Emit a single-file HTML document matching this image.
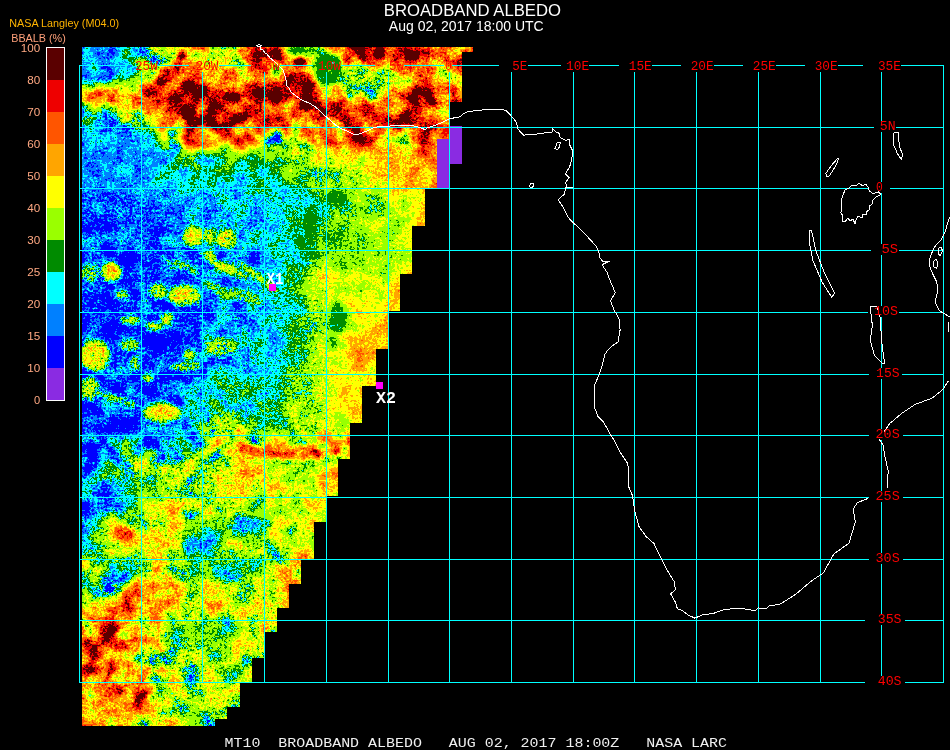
<!DOCTYPE html>
<html lang="en"><head><meta charset="utf-8"><title>BROADBAND ALBEDO</title>
<style>html,body{margin:0;padding:0;background:#000;}body{width:950px;height:750px;overflow:hidden;}svg{display:block;}.t{font-family:"Liberation Sans",Arial,sans-serif;}.m{font-family:"Liberation Mono","DejaVu Sans Mono",monospace;}</style></head><body>
<svg width="950" height="750" viewBox="0 0 950 750">
<defs>
<clipPath id="swath"><polygon points="82.0,47.0 473.0,47.0 473.0,52.0 462.0,52.0 462.0,102.0 450.0,102.0 450.0,188.0 425.0,188.0 425.0,226.0 412.0,226.0 412.0,274.0 400.0,274.0 400.0,311.0 388.0,311.0 388.0,349.0 376.0,349.0 376.0,386.0 362.0,386.0 362.0,423.0 350.0,423.0 350.0,459.0 338.0,459.0 338.0,496.0 326.0,496.0 326.0,522.0 314.0,522.0 314.0,559.0 301.0,559.0 301.0,584.0 289.0,584.0 289.0,608.0 277.0,608.0 277.0,632.0 264.0,632.0 264.0,658.0 252.0,658.0 252.0,682.0 240.0,682.0 240.0,707.0 227.0,707.0 227.0,719.0 215.0,719.0 215.0,726.0 82.0,726.0"/></clipPath>
<filter id="b1" filterUnits="userSpaceOnUse" x="30" y="0" width="500" height="750" color-interpolation-filters="sRGB"><feGaussianBlur stdDeviation="6"/></filter>
<filter id="b2" filterUnits="userSpaceOnUse" x="30" y="0" width="500" height="750" color-interpolation-filters="sRGB"><feGaussianBlur stdDeviation="2.2"/></filter>
<filter id="alb" filterUnits="userSpaceOnUse" x="60" y="30" width="440" height="710" color-interpolation-filters="sRGB">
<feColorMatrix in="SourceGraphic" type="matrix" values="1 0 0 0 0  1 0 0 0 0  1 0 0 0 0  0 0 0 0 1" result="f"/>
<feColorMatrix in="SourceGraphic" type="matrix" values="0 1 0 0 0  0 1 0 0 0  0 1 0 0 0  0 0 0 0 1" result="am"/>
<feTurbulence type="fractalNoise" baseFrequency="0.06 0.06" numOctaves="2" seed="7" result="n1"/>
<feColorMatrix in="n1" type="matrix" values="1 0 0 0 0  1 0 0 0 0  1 0 0 0 0  0 0 0 0 1" result="g1"/>
<feTurbulence type="fractalNoise" baseFrequency="0.4" numOctaves="2" seed="3" result="n2"/>
<feColorMatrix in="n2" type="matrix" values="0 1 0 0 0  0 1 0 0 0  0 1 0 0 0  0 0 0 0 1" result="g2"/>
<feComposite in="am" in2="g1" operator="arithmetic" k1="2.1930" k2="-1.0965" k3="0" k4="0.5" result="m1"/>
<feComposite in="f" in2="m1" operator="arithmetic" k1="0" k2="1" k3="1" k4="-0.5" result="s1"/>
<feColorMatrix in="SourceGraphic" type="matrix" values="0 0 1 0 0  0 0 1 0 0  0 0 1 0 0  0 0 0 0 1" result="fa"/>
<feComposite in="fa" in2="g2" operator="arithmetic" k1="2.1930" k2="-1.0965" k3="0" k4="0.5" result="m2"/>
<feComposite in="s1" in2="m2" operator="arithmetic" k1="0" k2="1" k3="1" k4="-0.5" result="s2"/>
<feComponentTransfer in="s2">
<feFuncR type="discrete" tableValues="0.0000 0.0000 0.0000 0.0000 0.0000 0.0000 0.6039 0.6039 1.0000 1.0000 1.0000 1.0000 1.0000 1.0000 0.9333 0.9333 0.3529 0.3529 0.3529 0.3529"/>
<feFuncG type="discrete" tableValues="0.0000 0.0000 0.0000 0.5020 1.0000 0.5451 1.0000 1.0000 1.0000 1.0000 0.6471 0.6471 0.3333 0.3333 0.0000 0.0000 0.0000 0.0000 0.0000 0.0000"/>
<feFuncB type="discrete" tableValues="1.0000 1.0000 1.0000 1.0000 1.0000 0.0000 0.0000 0.0000 0.0000 0.0000 0.0000 0.0000 0.0000 0.0000 0.0000 0.0000 0.0000 0.0000 0.0000 0.0000"/>
</feComponentTransfer>
</filter>
</defs>
<rect width="950" height="750" fill="#000"/>
<g clip-path="url(#swath)"><g filter="url(#alb)">
<g filter="url(#b1)">
<rect x="30" y="0" width="500" height="750" fill="#808030"/>
<rect x="50.3" y="14.9" width="51.1" height="51.1" fill="rgb(45,31,18)"/>
<rect x="100.9" y="14.9" width="21.1" height="51.1" fill="rgb(42,31,18)"/>
<rect x="121.4" y="14.9" width="21.1" height="51.1" fill="rgb(50,31,18)"/>
<rect x="142.0" y="14.9" width="21.1" height="51.1" fill="rgb(76,92,51)"/>
<rect x="162.6" y="14.9" width="21.1" height="51.1" fill="rgb(115,92,51)"/>
<rect x="183.1" y="14.9" width="21.1" height="51.1" fill="rgb(148,92,51)"/>
<rect x="203.7" y="14.9" width="21.1" height="51.1" fill="rgb(102,92,51)"/>
<rect x="224.3" y="14.9" width="21.1" height="51.1" fill="rgb(89,92,51)"/>
<rect x="244.8" y="14.9" width="21.1" height="51.1" fill="rgb(186,92,51)"/>
<rect x="265.4" y="14.9" width="21.1" height="51.1" fill="rgb(186,92,51)"/>
<rect x="286.0" y="14.9" width="21.1" height="51.1" fill="rgb(73,36,26)"/>
<rect x="306.5" y="14.9" width="21.1" height="51.1" fill="rgb(84,71,51)"/>
<rect x="327.1" y="14.9" width="21.1" height="51.1" fill="rgb(161,71,51)"/>
<rect x="347.7" y="14.9" width="21.1" height="51.1" fill="rgb(196,71,51)"/>
<rect x="368.2" y="14.9" width="21.1" height="51.1" fill="rgb(196,71,51)"/>
<rect x="388.8" y="14.9" width="21.1" height="51.1" fill="rgb(196,71,51)"/>
<rect x="409.4" y="14.9" width="21.1" height="51.1" fill="rgb(173,92,51)"/>
<rect x="429.9" y="14.9" width="21.1" height="51.1" fill="rgb(145,92,51)"/>
<rect x="450.5" y="14.9" width="21.1" height="51.1" fill="rgb(153,92,51)"/>
<rect x="471.1" y="14.9" width="21.1" height="51.1" fill="rgb(153,92,51)"/>
<rect x="491.6" y="14.9" width="21.1" height="51.1" fill="rgb(153,92,51)"/>
<rect x="50.3" y="65.5" width="51.1" height="21.1" fill="rgb(42,31,18)"/>
<rect x="100.9" y="65.5" width="21.1" height="21.1" fill="rgb(52,31,18)"/>
<rect x="121.4" y="65.5" width="21.1" height="21.1" fill="rgb(57,31,18)"/>
<rect x="142.0" y="65.5" width="21.1" height="21.1" fill="rgb(115,92,51)"/>
<rect x="162.6" y="65.5" width="21.1" height="21.1" fill="rgb(181,92,51)"/>
<rect x="183.1" y="65.5" width="21.1" height="21.1" fill="rgb(186,92,51)"/>
<rect x="203.7" y="65.5" width="21.1" height="21.1" fill="rgb(122,92,51)"/>
<rect x="224.3" y="65.5" width="21.1" height="21.1" fill="rgb(115,92,51)"/>
<rect x="244.8" y="65.5" width="21.1" height="21.1" fill="rgb(161,92,51)"/>
<rect x="265.4" y="65.5" width="21.1" height="21.1" fill="rgb(148,92,51)"/>
<rect x="286.0" y="65.5" width="21.1" height="21.1" fill="rgb(196,71,51)"/>
<rect x="306.5" y="65.5" width="21.1" height="21.1" fill="rgb(128,71,51)"/>
<rect x="327.1" y="65.5" width="21.1" height="21.1" fill="rgb(73,36,26)"/>
<rect x="347.7" y="65.5" width="21.1" height="21.1" fill="rgb(76,71,51)"/>
<rect x="368.2" y="65.5" width="21.1" height="21.1" fill="rgb(94,71,51)"/>
<rect x="388.8" y="65.5" width="21.1" height="21.1" fill="rgb(110,71,51)"/>
<rect x="409.4" y="65.5" width="21.1" height="21.1" fill="rgb(145,92,51)"/>
<rect x="429.9" y="65.5" width="21.1" height="21.1" fill="rgb(140,92,51)"/>
<rect x="450.5" y="65.5" width="21.1" height="21.1" fill="rgb(140,92,51)"/>
<rect x="471.1" y="65.5" width="21.1" height="21.1" fill="rgb(140,92,51)"/>
<rect x="491.6" y="65.5" width="21.1" height="21.1" fill="rgb(140,92,51)"/>
<rect x="50.3" y="86.1" width="51.1" height="21.1" fill="rgb(128,102,51)"/>
<rect x="100.9" y="86.1" width="21.1" height="21.1" fill="rgb(161,102,51)"/>
<rect x="121.4" y="86.1" width="21.1" height="21.1" fill="rgb(161,102,51)"/>
<rect x="142.0" y="86.1" width="21.1" height="21.1" fill="rgb(181,92,51)"/>
<rect x="162.6" y="86.1" width="21.1" height="21.1" fill="rgb(186,92,51)"/>
<rect x="183.1" y="86.1" width="21.1" height="21.1" fill="rgb(196,92,51)"/>
<rect x="203.7" y="86.1" width="21.1" height="21.1" fill="rgb(186,92,51)"/>
<rect x="224.3" y="86.1" width="21.1" height="21.1" fill="rgb(191,92,51)"/>
<rect x="244.8" y="86.1" width="21.1" height="21.1" fill="rgb(176,92,51)"/>
<rect x="265.4" y="86.1" width="21.1" height="21.1" fill="rgb(196,92,51)"/>
<rect x="286.0" y="86.1" width="21.1" height="21.1" fill="rgb(196,92,51)"/>
<rect x="306.5" y="86.1" width="21.1" height="21.1" fill="rgb(191,92,51)"/>
<rect x="327.1" y="86.1" width="21.1" height="21.1" fill="rgb(135,92,51)"/>
<rect x="347.7" y="86.1" width="21.1" height="21.1" fill="rgb(122,92,51)"/>
<rect x="368.2" y="86.1" width="21.1" height="21.1" fill="rgb(135,92,51)"/>
<rect x="388.8" y="86.1" width="21.1" height="21.1" fill="rgb(135,92,51)"/>
<rect x="409.4" y="86.1" width="21.1" height="21.1" fill="rgb(204,92,51)"/>
<rect x="429.9" y="86.1" width="21.1" height="21.1" fill="rgb(145,92,51)"/>
<rect x="450.5" y="86.1" width="21.1" height="21.1" fill="rgb(140,92,51)"/>
<rect x="471.1" y="86.1" width="21.1" height="21.1" fill="rgb(140,92,51)"/>
<rect x="491.6" y="86.1" width="21.1" height="21.1" fill="rgb(140,92,51)"/>
<rect x="50.3" y="106.6" width="51.1" height="21.1" fill="rgb(50,41,26)"/>
<rect x="100.9" y="106.6" width="21.1" height="21.1" fill="rgb(55,41,26)"/>
<rect x="121.4" y="106.6" width="21.1" height="21.1" fill="rgb(76,82,51)"/>
<rect x="142.0" y="106.6" width="21.1" height="21.1" fill="rgb(128,92,51)"/>
<rect x="162.6" y="106.6" width="21.1" height="21.1" fill="rgb(173,92,51)"/>
<rect x="183.1" y="106.6" width="21.1" height="21.1" fill="rgb(196,92,51)"/>
<rect x="203.7" y="106.6" width="21.1" height="21.1" fill="rgb(196,92,51)"/>
<rect x="224.3" y="106.6" width="21.1" height="21.1" fill="rgb(191,92,51)"/>
<rect x="244.8" y="106.6" width="21.1" height="21.1" fill="rgb(186,92,51)"/>
<rect x="265.4" y="106.6" width="21.1" height="21.1" fill="rgb(186,92,51)"/>
<rect x="286.0" y="106.6" width="21.1" height="21.1" fill="rgb(161,92,51)"/>
<rect x="306.5" y="106.6" width="21.1" height="21.1" fill="rgb(186,92,51)"/>
<rect x="327.1" y="106.6" width="21.1" height="21.1" fill="rgb(186,92,51)"/>
<rect x="347.7" y="106.6" width="21.1" height="21.1" fill="rgb(186,92,51)"/>
<rect x="368.2" y="106.6" width="21.1" height="21.1" fill="rgb(186,92,51)"/>
<rect x="388.8" y="106.6" width="21.1" height="21.1" fill="rgb(196,92,51)"/>
<rect x="409.4" y="106.6" width="21.1" height="21.1" fill="rgb(196,92,51)"/>
<rect x="429.9" y="106.6" width="21.1" height="21.1" fill="rgb(135,92,51)"/>
<rect x="450.5" y="106.6" width="21.1" height="21.1" fill="rgb(140,92,51)"/>
<rect x="471.1" y="106.6" width="21.1" height="21.1" fill="rgb(140,92,51)"/>
<rect x="491.6" y="106.6" width="21.1" height="21.1" fill="rgb(140,92,51)"/>
<rect x="50.3" y="127.2" width="51.1" height="21.1" fill="rgb(45,20,18)"/>
<rect x="100.9" y="127.2" width="21.1" height="21.1" fill="rgb(45,20,18)"/>
<rect x="121.4" y="127.2" width="21.1" height="21.1" fill="rgb(46,20,18)"/>
<rect x="142.0" y="127.2" width="21.1" height="21.1" fill="rgb(50,20,18)"/>
<rect x="162.6" y="127.2" width="21.1" height="21.1" fill="rgb(102,122,36)"/>
<rect x="183.1" y="127.2" width="21.1" height="21.1" fill="rgb(140,122,36)"/>
<rect x="203.7" y="127.2" width="21.1" height="21.1" fill="rgb(153,122,36)"/>
<rect x="224.3" y="127.2" width="21.1" height="21.1" fill="rgb(153,122,36)"/>
<rect x="244.8" y="127.2" width="21.1" height="21.1" fill="rgb(140,122,36)"/>
<rect x="265.4" y="127.2" width="21.1" height="21.1" fill="rgb(97,122,41)"/>
<rect x="286.0" y="127.2" width="21.1" height="21.1" fill="rgb(110,122,41)"/>
<rect x="306.5" y="127.2" width="21.1" height="21.1" fill="rgb(140,122,41)"/>
<rect x="327.1" y="127.2" width="21.1" height="21.1" fill="rgb(153,122,41)"/>
<rect x="347.7" y="127.2" width="21.1" height="21.1" fill="rgb(178,122,41)"/>
<rect x="368.2" y="127.2" width="21.1" height="21.1" fill="rgb(140,122,41)"/>
<rect x="388.8" y="127.2" width="21.1" height="21.1" fill="rgb(128,122,41)"/>
<rect x="409.4" y="127.2" width="21.1" height="21.1" fill="rgb(153,122,41)"/>
<rect x="429.9" y="127.2" width="21.1" height="21.1" fill="rgb(166,122,41)"/>
<rect x="450.5" y="127.2" width="21.1" height="21.1" fill="rgb(166,122,41)"/>
<rect x="471.1" y="127.2" width="21.1" height="21.1" fill="rgb(166,122,41)"/>
<rect x="491.6" y="127.2" width="21.1" height="21.1" fill="rgb(166,122,41)"/>
<rect x="50.3" y="147.8" width="51.1" height="21.1" fill="rgb(43,20,18)"/>
<rect x="100.9" y="147.8" width="21.1" height="21.1" fill="rgb(45,20,18)"/>
<rect x="121.4" y="147.8" width="21.1" height="21.1" fill="rgb(46,20,18)"/>
<rect x="142.0" y="147.8" width="21.1" height="21.1" fill="rgb(48,20,18)"/>
<rect x="162.6" y="147.8" width="21.1" height="21.1" fill="rgb(57,26,18)"/>
<rect x="183.1" y="147.8" width="21.1" height="21.1" fill="rgb(79,51,36)"/>
<rect x="203.7" y="147.8" width="21.1" height="21.1" fill="rgb(68,26,18)"/>
<rect x="224.3" y="147.8" width="21.1" height="21.1" fill="rgb(74,26,18)"/>
<rect x="244.8" y="147.8" width="21.1" height="21.1" fill="rgb(70,26,18)"/>
<rect x="265.4" y="147.8" width="21.1" height="21.1" fill="rgb(70,26,20)"/>
<rect x="286.0" y="147.8" width="21.1" height="21.1" fill="rgb(84,51,41)"/>
<rect x="306.5" y="147.8" width="21.1" height="21.1" fill="rgb(97,51,41)"/>
<rect x="327.1" y="147.8" width="21.1" height="21.1" fill="rgb(102,51,41)"/>
<rect x="347.7" y="147.8" width="21.1" height="21.1" fill="rgb(120,51,41)"/>
<rect x="368.2" y="147.8" width="21.1" height="21.1" fill="rgb(128,51,41)"/>
<rect x="388.8" y="147.8" width="21.1" height="21.1" fill="rgb(128,51,41)"/>
<rect x="409.4" y="147.8" width="21.1" height="21.1" fill="rgb(145,51,41)"/>
<rect x="429.9" y="147.8" width="21.1" height="21.1" fill="rgb(153,51,41)"/>
<rect x="450.5" y="147.8" width="21.1" height="21.1" fill="rgb(153,51,41)"/>
<rect x="471.1" y="147.8" width="21.1" height="21.1" fill="rgb(153,51,41)"/>
<rect x="491.6" y="147.8" width="21.1" height="21.1" fill="rgb(153,51,41)"/>
<rect x="50.3" y="168.3" width="51.1" height="21.1" fill="rgb(46,20,18)"/>
<rect x="100.9" y="168.3" width="21.1" height="21.1" fill="rgb(47,20,18)"/>
<rect x="121.4" y="168.3" width="21.1" height="21.1" fill="rgb(48,20,18)"/>
<rect x="142.0" y="168.3" width="21.1" height="21.1" fill="rgb(51,20,18)"/>
<rect x="162.6" y="168.3" width="21.1" height="21.1" fill="rgb(56,26,18)"/>
<rect x="183.1" y="168.3" width="21.1" height="21.1" fill="rgb(59,26,18)"/>
<rect x="203.7" y="168.3" width="21.1" height="21.1" fill="rgb(59,26,18)"/>
<rect x="224.3" y="168.3" width="21.1" height="21.1" fill="rgb(59,26,18)"/>
<rect x="244.8" y="168.3" width="21.1" height="21.1" fill="rgb(59,26,18)"/>
<rect x="265.4" y="168.3" width="21.1" height="21.1" fill="rgb(65,26,20)"/>
<rect x="286.0" y="168.3" width="21.1" height="21.1" fill="rgb(70,26,20)"/>
<rect x="306.5" y="168.3" width="21.1" height="21.1" fill="rgb(82,51,41)"/>
<rect x="327.1" y="168.3" width="21.1" height="21.1" fill="rgb(84,51,41)"/>
<rect x="347.7" y="168.3" width="21.1" height="21.1" fill="rgb(102,51,41)"/>
<rect x="368.2" y="168.3" width="21.1" height="21.1" fill="rgb(110,51,41)"/>
<rect x="388.8" y="168.3" width="21.1" height="21.1" fill="rgb(122,51,41)"/>
<rect x="409.4" y="168.3" width="21.1" height="21.1" fill="rgb(140,51,41)"/>
<rect x="429.9" y="168.3" width="21.1" height="21.1" fill="rgb(153,51,41)"/>
<rect x="450.5" y="168.3" width="21.1" height="21.1" fill="rgb(153,51,41)"/>
<rect x="471.1" y="168.3" width="21.1" height="21.1" fill="rgb(153,51,41)"/>
<rect x="491.6" y="168.3" width="21.1" height="21.1" fill="rgb(153,51,41)"/>
<rect x="50.3" y="188.9" width="51.1" height="21.1" fill="rgb(38,20,26)"/>
<rect x="100.9" y="188.9" width="21.1" height="21.1" fill="rgb(38,20,26)"/>
<rect x="121.4" y="188.9" width="21.1" height="21.1" fill="rgb(37,20,26)"/>
<rect x="142.0" y="188.9" width="21.1" height="21.1" fill="rgb(42,20,26)"/>
<rect x="162.6" y="188.9" width="21.1" height="21.1" fill="rgb(47,20,26)"/>
<rect x="183.1" y="188.9" width="21.1" height="21.1" fill="rgb(50,20,26)"/>
<rect x="203.7" y="188.9" width="21.1" height="21.1" fill="rgb(51,20,26)"/>
<rect x="224.3" y="188.9" width="21.1" height="21.1" fill="rgb(51,20,26)"/>
<rect x="244.8" y="188.9" width="21.1" height="21.1" fill="rgb(54,20,26)"/>
<rect x="265.4" y="188.9" width="21.1" height="21.1" fill="rgb(52,18,23)"/>
<rect x="286.0" y="188.9" width="21.1" height="21.1" fill="rgb(57,18,23)"/>
<rect x="306.5" y="188.9" width="21.1" height="21.1" fill="rgb(64,18,23)"/>
<rect x="327.1" y="188.9" width="21.1" height="21.1" fill="rgb(82,36,31)"/>
<rect x="347.7" y="188.9" width="21.1" height="21.1" fill="rgb(84,36,31)"/>
<rect x="368.2" y="188.9" width="21.1" height="21.1" fill="rgb(87,36,31)"/>
<rect x="388.8" y="188.9" width="21.1" height="21.1" fill="rgb(97,36,31)"/>
<rect x="409.4" y="188.9" width="21.1" height="21.1" fill="rgb(115,36,31)"/>
<rect x="429.9" y="188.9" width="21.1" height="21.1" fill="rgb(115,36,31)"/>
<rect x="450.5" y="188.9" width="21.1" height="21.1" fill="rgb(115,36,31)"/>
<rect x="471.1" y="188.9" width="21.1" height="21.1" fill="rgb(115,36,31)"/>
<rect x="491.6" y="188.9" width="21.1" height="21.1" fill="rgb(115,36,31)"/>
<rect x="50.3" y="209.5" width="51.1" height="21.1" fill="rgb(40,20,26)"/>
<rect x="100.9" y="209.5" width="21.1" height="21.1" fill="rgb(42,20,26)"/>
<rect x="121.4" y="209.5" width="21.1" height="21.1" fill="rgb(41,20,26)"/>
<rect x="142.0" y="209.5" width="21.1" height="21.1" fill="rgb(40,20,26)"/>
<rect x="162.6" y="209.5" width="21.1" height="21.1" fill="rgb(41,20,26)"/>
<rect x="183.1" y="209.5" width="21.1" height="21.1" fill="rgb(45,20,26)"/>
<rect x="203.7" y="209.5" width="21.1" height="21.1" fill="rgb(47,20,26)"/>
<rect x="224.3" y="209.5" width="21.1" height="21.1" fill="rgb(50,20,26)"/>
<rect x="244.8" y="209.5" width="21.1" height="21.1" fill="rgb(51,20,26)"/>
<rect x="265.4" y="209.5" width="21.1" height="21.1" fill="rgb(55,18,23)"/>
<rect x="286.0" y="209.5" width="21.1" height="21.1" fill="rgb(60,18,23)"/>
<rect x="306.5" y="209.5" width="21.1" height="21.1" fill="rgb(66,18,23)"/>
<rect x="327.1" y="209.5" width="21.1" height="21.1" fill="rgb(79,36,31)"/>
<rect x="347.7" y="209.5" width="21.1" height="21.1" fill="rgb(84,36,31)"/>
<rect x="368.2" y="209.5" width="21.1" height="21.1" fill="rgb(87,36,31)"/>
<rect x="388.8" y="209.5" width="21.1" height="21.1" fill="rgb(97,36,31)"/>
<rect x="409.4" y="209.5" width="21.1" height="21.1" fill="rgb(115,36,31)"/>
<rect x="429.9" y="209.5" width="21.1" height="21.1" fill="rgb(115,36,31)"/>
<rect x="450.5" y="209.5" width="21.1" height="21.1" fill="rgb(115,36,31)"/>
<rect x="471.1" y="209.5" width="21.1" height="21.1" fill="rgb(115,36,31)"/>
<rect x="491.6" y="209.5" width="21.1" height="21.1" fill="rgb(115,36,31)"/>
<rect x="50.3" y="230.0" width="51.1" height="21.1" fill="rgb(37,28,26)"/>
<rect x="100.9" y="230.0" width="21.1" height="21.1" fill="rgb(40,28,26)"/>
<rect x="121.4" y="230.0" width="21.1" height="21.1" fill="rgb(42,28,26)"/>
<rect x="142.0" y="230.0" width="21.1" height="21.1" fill="rgb(38,28,26)"/>
<rect x="162.6" y="230.0" width="21.1" height="21.1" fill="rgb(40,28,26)"/>
<rect x="183.1" y="230.0" width="21.1" height="21.1" fill="rgb(42,28,26)"/>
<rect x="203.7" y="230.0" width="21.1" height="21.1" fill="rgb(45,28,26)"/>
<rect x="224.3" y="230.0" width="21.1" height="21.1" fill="rgb(45,28,26)"/>
<rect x="244.8" y="230.0" width="21.1" height="21.1" fill="rgb(50,28,26)"/>
<rect x="265.4" y="230.0" width="21.1" height="21.1" fill="rgb(57,18,23)"/>
<rect x="286.0" y="230.0" width="21.1" height="21.1" fill="rgb(61,18,23)"/>
<rect x="306.5" y="230.0" width="21.1" height="21.1" fill="rgb(68,18,23)"/>
<rect x="327.1" y="230.0" width="21.1" height="21.1" fill="rgb(75,10,15)"/>
<rect x="347.7" y="230.0" width="21.1" height="21.1" fill="rgb(84,20,31)"/>
<rect x="368.2" y="230.0" width="21.1" height="21.1" fill="rgb(87,20,31)"/>
<rect x="388.8" y="230.0" width="21.1" height="21.1" fill="rgb(97,20,31)"/>
<rect x="409.4" y="230.0" width="21.1" height="21.1" fill="rgb(115,20,31)"/>
<rect x="429.9" y="230.0" width="21.1" height="21.1" fill="rgb(115,20,31)"/>
<rect x="450.5" y="230.0" width="21.1" height="21.1" fill="rgb(115,20,31)"/>
<rect x="471.1" y="230.0" width="21.1" height="21.1" fill="rgb(115,20,31)"/>
<rect x="491.6" y="230.0" width="21.1" height="21.1" fill="rgb(115,20,31)"/>
<rect x="50.3" y="250.6" width="51.1" height="21.1" fill="rgb(36,28,26)"/>
<rect x="100.9" y="250.6" width="21.1" height="21.1" fill="rgb(36,28,26)"/>
<rect x="121.4" y="250.6" width="21.1" height="21.1" fill="rgb(32,28,26)"/>
<rect x="142.0" y="250.6" width="21.1" height="21.1" fill="rgb(34,28,26)"/>
<rect x="162.6" y="250.6" width="21.1" height="21.1" fill="rgb(38,28,26)"/>
<rect x="183.1" y="250.6" width="21.1" height="21.1" fill="rgb(40,28,26)"/>
<rect x="203.7" y="250.6" width="21.1" height="21.1" fill="rgb(42,28,26)"/>
<rect x="224.3" y="250.6" width="21.1" height="21.1" fill="rgb(42,28,26)"/>
<rect x="244.8" y="250.6" width="21.1" height="21.1" fill="rgb(45,28,26)"/>
<rect x="265.4" y="250.6" width="21.1" height="21.1" fill="rgb(55,18,23)"/>
<rect x="286.0" y="250.6" width="21.1" height="21.1" fill="rgb(61,18,23)"/>
<rect x="306.5" y="250.6" width="21.1" height="21.1" fill="rgb(79,36,46)"/>
<rect x="327.1" y="250.6" width="21.1" height="21.1" fill="rgb(84,20,31)"/>
<rect x="347.7" y="250.6" width="21.1" height="21.1" fill="rgb(84,20,31)"/>
<rect x="368.2" y="250.6" width="21.1" height="21.1" fill="rgb(87,20,31)"/>
<rect x="388.8" y="250.6" width="21.1" height="21.1" fill="rgb(99,20,31)"/>
<rect x="409.4" y="250.6" width="21.1" height="21.1" fill="rgb(115,20,31)"/>
<rect x="429.9" y="250.6" width="21.1" height="21.1" fill="rgb(115,20,31)"/>
<rect x="450.5" y="250.6" width="21.1" height="21.1" fill="rgb(115,20,31)"/>
<rect x="471.1" y="250.6" width="21.1" height="21.1" fill="rgb(115,20,31)"/>
<rect x="491.6" y="250.6" width="21.1" height="21.1" fill="rgb(115,20,31)"/>
<rect x="50.3" y="271.2" width="51.1" height="21.1" fill="rgb(36,28,26)"/>
<rect x="100.9" y="271.2" width="21.1" height="21.1" fill="rgb(36,28,26)"/>
<rect x="121.4" y="271.2" width="21.1" height="21.1" fill="rgb(32,28,26)"/>
<rect x="142.0" y="271.2" width="21.1" height="21.1" fill="rgb(34,28,26)"/>
<rect x="162.6" y="271.2" width="21.1" height="21.1" fill="rgb(38,28,26)"/>
<rect x="183.1" y="271.2" width="21.1" height="21.1" fill="rgb(40,28,26)"/>
<rect x="203.7" y="271.2" width="21.1" height="21.1" fill="rgb(42,28,26)"/>
<rect x="224.3" y="271.2" width="21.1" height="21.1" fill="rgb(42,28,26)"/>
<rect x="244.8" y="271.2" width="21.1" height="21.1" fill="rgb(45,28,26)"/>
<rect x="265.4" y="271.2" width="21.1" height="21.1" fill="rgb(55,18,23)"/>
<rect x="286.0" y="271.2" width="21.1" height="21.1" fill="rgb(65,18,23)"/>
<rect x="306.5" y="271.2" width="21.1" height="21.1" fill="rgb(105,36,46)"/>
<rect x="327.1" y="271.2" width="21.1" height="21.1" fill="rgb(110,36,31)"/>
<rect x="347.7" y="271.2" width="21.1" height="21.1" fill="rgb(99,36,31)"/>
<rect x="368.2" y="271.2" width="21.1" height="21.1" fill="rgb(94,36,31)"/>
<rect x="388.8" y="271.2" width="21.1" height="21.1" fill="rgb(120,36,31)"/>
<rect x="409.4" y="271.2" width="21.1" height="21.1" fill="rgb(120,36,31)"/>
<rect x="429.9" y="271.2" width="21.1" height="21.1" fill="rgb(120,36,31)"/>
<rect x="450.5" y="271.2" width="21.1" height="21.1" fill="rgb(120,36,31)"/>
<rect x="471.1" y="271.2" width="21.1" height="21.1" fill="rgb(120,36,31)"/>
<rect x="491.6" y="271.2" width="21.1" height="21.1" fill="rgb(120,36,31)"/>
<rect x="50.3" y="291.7" width="51.1" height="21.1" fill="rgb(32,28,26)"/>
<rect x="100.9" y="291.7" width="21.1" height="21.1" fill="rgb(33,28,26)"/>
<rect x="121.4" y="291.7" width="21.1" height="21.1" fill="rgb(33,28,26)"/>
<rect x="142.0" y="291.7" width="21.1" height="21.1" fill="rgb(36,28,26)"/>
<rect x="162.6" y="291.7" width="21.1" height="21.1" fill="rgb(38,28,26)"/>
<rect x="183.1" y="291.7" width="21.1" height="21.1" fill="rgb(38,28,26)"/>
<rect x="203.7" y="291.7" width="21.1" height="21.1" fill="rgb(41,28,26)"/>
<rect x="224.3" y="291.7" width="21.1" height="21.1" fill="rgb(42,28,26)"/>
<rect x="244.8" y="291.7" width="21.1" height="21.1" fill="rgb(45,28,26)"/>
<rect x="265.4" y="291.7" width="21.1" height="21.1" fill="rgb(55,18,23)"/>
<rect x="286.0" y="291.7" width="21.1" height="21.1" fill="rgb(64,18,23)"/>
<rect x="306.5" y="291.7" width="21.1" height="21.1" fill="rgb(97,36,46)"/>
<rect x="327.1" y="291.7" width="21.1" height="21.1" fill="rgb(102,36,31)"/>
<rect x="347.7" y="291.7" width="21.1" height="21.1" fill="rgb(122,36,31)"/>
<rect x="368.2" y="291.7" width="21.1" height="21.1" fill="rgb(102,36,31)"/>
<rect x="388.8" y="291.7" width="21.1" height="21.1" fill="rgb(120,36,31)"/>
<rect x="409.4" y="291.7" width="21.1" height="21.1" fill="rgb(120,36,31)"/>
<rect x="429.9" y="291.7" width="21.1" height="21.1" fill="rgb(120,36,31)"/>
<rect x="450.5" y="291.7" width="21.1" height="21.1" fill="rgb(120,36,31)"/>
<rect x="471.1" y="291.7" width="21.1" height="21.1" fill="rgb(120,36,31)"/>
<rect x="491.6" y="291.7" width="21.1" height="21.1" fill="rgb(120,36,31)"/>
<rect x="50.3" y="312.3" width="51.1" height="21.1" fill="rgb(31,28,26)"/>
<rect x="100.9" y="312.3" width="21.1" height="21.1" fill="rgb(32,28,26)"/>
<rect x="121.4" y="312.3" width="21.1" height="21.1" fill="rgb(34,28,26)"/>
<rect x="142.0" y="312.3" width="21.1" height="21.1" fill="rgb(34,28,26)"/>
<rect x="162.6" y="312.3" width="21.1" height="21.1" fill="rgb(34,28,26)"/>
<rect x="183.1" y="312.3" width="21.1" height="21.1" fill="rgb(34,28,26)"/>
<rect x="203.7" y="312.3" width="21.1" height="21.1" fill="rgb(45,28,26)"/>
<rect x="224.3" y="312.3" width="21.1" height="21.1" fill="rgb(47,28,26)"/>
<rect x="244.8" y="312.3" width="21.1" height="21.1" fill="rgb(50,28,26)"/>
<rect x="265.4" y="312.3" width="21.1" height="21.1" fill="rgb(55,18,23)"/>
<rect x="286.0" y="312.3" width="21.1" height="21.1" fill="rgb(65,18,23)"/>
<rect x="306.5" y="312.3" width="21.1" height="21.1" fill="rgb(89,36,46)"/>
<rect x="327.1" y="312.3" width="21.1" height="21.1" fill="rgb(84,36,31)"/>
<rect x="347.7" y="312.3" width="21.1" height="21.1" fill="rgb(102,36,31)"/>
<rect x="368.2" y="312.3" width="21.1" height="21.1" fill="rgb(128,36,31)"/>
<rect x="388.8" y="312.3" width="21.1" height="21.1" fill="rgb(128,36,31)"/>
<rect x="409.4" y="312.3" width="21.1" height="21.1" fill="rgb(128,36,31)"/>
<rect x="429.9" y="312.3" width="21.1" height="21.1" fill="rgb(128,36,31)"/>
<rect x="450.5" y="312.3" width="21.1" height="21.1" fill="rgb(128,36,31)"/>
<rect x="471.1" y="312.3" width="21.1" height="21.1" fill="rgb(128,36,31)"/>
<rect x="491.6" y="312.3" width="21.1" height="21.1" fill="rgb(128,36,31)"/>
<rect x="50.3" y="332.9" width="51.1" height="21.1" fill="rgb(32,28,26)"/>
<rect x="100.9" y="332.9" width="21.1" height="21.1" fill="rgb(34,28,26)"/>
<rect x="121.4" y="332.9" width="21.1" height="21.1" fill="rgb(34,28,26)"/>
<rect x="142.0" y="332.9" width="21.1" height="21.1" fill="rgb(32,28,26)"/>
<rect x="162.6" y="332.9" width="21.1" height="21.1" fill="rgb(31,28,26)"/>
<rect x="183.1" y="332.9" width="21.1" height="21.1" fill="rgb(34,28,26)"/>
<rect x="203.7" y="332.9" width="21.1" height="21.1" fill="rgb(45,28,26)"/>
<rect x="224.3" y="332.9" width="21.1" height="21.1" fill="rgb(47,28,26)"/>
<rect x="244.8" y="332.9" width="21.1" height="21.1" fill="rgb(50,28,26)"/>
<rect x="265.4" y="332.9" width="21.1" height="21.1" fill="rgb(56,18,23)"/>
<rect x="286.0" y="332.9" width="21.1" height="21.1" fill="rgb(65,18,23)"/>
<rect x="306.5" y="332.9" width="21.1" height="21.1" fill="rgb(89,36,46)"/>
<rect x="327.1" y="332.9" width="21.1" height="21.1" fill="rgb(102,36,31)"/>
<rect x="347.7" y="332.9" width="21.1" height="21.1" fill="rgb(148,36,31)"/>
<rect x="368.2" y="332.9" width="21.1" height="21.1" fill="rgb(135,36,31)"/>
<rect x="388.8" y="332.9" width="21.1" height="21.1" fill="rgb(135,36,31)"/>
<rect x="409.4" y="332.9" width="21.1" height="21.1" fill="rgb(135,36,31)"/>
<rect x="429.9" y="332.9" width="21.1" height="21.1" fill="rgb(135,36,31)"/>
<rect x="450.5" y="332.9" width="21.1" height="21.1" fill="rgb(135,36,31)"/>
<rect x="471.1" y="332.9" width="21.1" height="21.1" fill="rgb(135,36,31)"/>
<rect x="491.6" y="332.9" width="21.1" height="21.1" fill="rgb(135,36,31)"/>
<rect x="50.3" y="353.4" width="51.1" height="21.1" fill="rgb(34,28,26)"/>
<rect x="100.9" y="353.4" width="21.1" height="21.1" fill="rgb(34,28,26)"/>
<rect x="121.4" y="353.4" width="21.1" height="21.1" fill="rgb(36,28,26)"/>
<rect x="142.0" y="353.4" width="21.1" height="21.1" fill="rgb(34,28,26)"/>
<rect x="162.6" y="353.4" width="21.1" height="21.1" fill="rgb(34,28,26)"/>
<rect x="183.1" y="353.4" width="21.1" height="21.1" fill="rgb(38,28,26)"/>
<rect x="203.7" y="353.4" width="21.1" height="21.1" fill="rgb(45,28,26)"/>
<rect x="224.3" y="353.4" width="21.1" height="21.1" fill="rgb(45,28,26)"/>
<rect x="244.8" y="353.4" width="21.1" height="21.1" fill="rgb(48,28,26)"/>
<rect x="265.4" y="353.4" width="21.1" height="21.1" fill="rgb(57,18,23)"/>
<rect x="286.0" y="353.4" width="21.1" height="21.1" fill="rgb(68,18,23)"/>
<rect x="306.5" y="353.4" width="21.1" height="21.1" fill="rgb(92,36,46)"/>
<rect x="327.1" y="353.4" width="21.1" height="21.1" fill="rgb(110,36,31)"/>
<rect x="347.7" y="353.4" width="21.1" height="21.1" fill="rgb(128,36,31)"/>
<rect x="368.2" y="353.4" width="21.1" height="21.1" fill="rgb(122,36,31)"/>
<rect x="388.8" y="353.4" width="21.1" height="21.1" fill="rgb(122,36,31)"/>
<rect x="409.4" y="353.4" width="21.1" height="21.1" fill="rgb(122,36,31)"/>
<rect x="429.9" y="353.4" width="21.1" height="21.1" fill="rgb(122,36,31)"/>
<rect x="450.5" y="353.4" width="21.1" height="21.1" fill="rgb(122,36,31)"/>
<rect x="471.1" y="353.4" width="21.1" height="21.1" fill="rgb(122,36,31)"/>
<rect x="491.6" y="353.4" width="21.1" height="21.1" fill="rgb(122,36,31)"/>
<rect x="50.3" y="374.0" width="51.1" height="21.1" fill="rgb(34,28,26)"/>
<rect x="100.9" y="374.0" width="21.1" height="21.1" fill="rgb(34,28,26)"/>
<rect x="121.4" y="374.0" width="21.1" height="21.1" fill="rgb(36,28,26)"/>
<rect x="142.0" y="374.0" width="21.1" height="21.1" fill="rgb(36,28,26)"/>
<rect x="162.6" y="374.0" width="21.1" height="21.1" fill="rgb(38,28,26)"/>
<rect x="183.1" y="374.0" width="21.1" height="21.1" fill="rgb(45,28,26)"/>
<rect x="203.7" y="374.0" width="21.1" height="21.1" fill="rgb(66,28,26)"/>
<rect x="224.3" y="374.0" width="21.1" height="21.1" fill="rgb(66,28,26)"/>
<rect x="244.8" y="374.0" width="21.1" height="21.1" fill="rgb(63,28,26)"/>
<rect x="265.4" y="374.0" width="21.1" height="21.1" fill="rgb(61,18,23)"/>
<rect x="286.0" y="374.0" width="21.1" height="21.1" fill="rgb(79,36,46)"/>
<rect x="306.5" y="374.0" width="21.1" height="21.1" fill="rgb(94,36,46)"/>
<rect x="327.1" y="374.0" width="21.1" height="21.1" fill="rgb(110,36,31)"/>
<rect x="347.7" y="374.0" width="21.1" height="21.1" fill="rgb(115,36,31)"/>
<rect x="368.2" y="374.0" width="21.1" height="21.1" fill="rgb(128,36,31)"/>
<rect x="388.8" y="374.0" width="21.1" height="21.1" fill="rgb(128,36,31)"/>
<rect x="409.4" y="374.0" width="21.1" height="21.1" fill="rgb(128,36,31)"/>
<rect x="429.9" y="374.0" width="21.1" height="21.1" fill="rgb(128,36,31)"/>
<rect x="450.5" y="374.0" width="21.1" height="21.1" fill="rgb(128,36,31)"/>
<rect x="471.1" y="374.0" width="21.1" height="21.1" fill="rgb(128,36,31)"/>
<rect x="491.6" y="374.0" width="21.1" height="21.1" fill="rgb(128,36,31)"/>
<rect x="50.3" y="394.6" width="51.1" height="21.1" fill="rgb(34,28,26)"/>
<rect x="100.9" y="394.6" width="21.1" height="21.1" fill="rgb(36,28,26)"/>
<rect x="121.4" y="394.6" width="21.1" height="21.1" fill="rgb(38,28,26)"/>
<rect x="142.0" y="394.6" width="21.1" height="21.1" fill="rgb(38,28,26)"/>
<rect x="162.6" y="394.6" width="21.1" height="21.1" fill="rgb(42,28,26)"/>
<rect x="183.1" y="394.6" width="21.1" height="21.1" fill="rgb(48,28,26)"/>
<rect x="203.7" y="394.6" width="21.1" height="21.1" fill="rgb(66,28,26)"/>
<rect x="224.3" y="394.6" width="21.1" height="21.1" fill="rgb(66,28,26)"/>
<rect x="244.8" y="394.6" width="21.1" height="21.1" fill="rgb(57,28,26)"/>
<rect x="265.4" y="394.6" width="21.1" height="21.1" fill="rgb(64,18,23)"/>
<rect x="286.0" y="394.6" width="21.1" height="21.1" fill="rgb(84,36,46)"/>
<rect x="306.5" y="394.6" width="21.1" height="21.1" fill="rgb(94,36,46)"/>
<rect x="327.1" y="394.6" width="21.1" height="21.1" fill="rgb(105,36,31)"/>
<rect x="347.7" y="394.6" width="21.1" height="21.1" fill="rgb(128,36,31)"/>
<rect x="368.2" y="394.6" width="21.1" height="21.1" fill="rgb(128,36,31)"/>
<rect x="388.8" y="394.6" width="21.1" height="21.1" fill="rgb(128,36,31)"/>
<rect x="409.4" y="394.6" width="21.1" height="21.1" fill="rgb(128,36,31)"/>
<rect x="429.9" y="394.6" width="21.1" height="21.1" fill="rgb(128,36,31)"/>
<rect x="450.5" y="394.6" width="21.1" height="21.1" fill="rgb(128,36,31)"/>
<rect x="471.1" y="394.6" width="21.1" height="21.1" fill="rgb(128,36,31)"/>
<rect x="491.6" y="394.6" width="21.1" height="21.1" fill="rgb(128,36,31)"/>
<rect x="50.3" y="415.1" width="51.1" height="21.1" fill="rgb(32,28,26)"/>
<rect x="100.9" y="415.1" width="21.1" height="21.1" fill="rgb(33,28,26)"/>
<rect x="121.4" y="415.1" width="21.1" height="21.1" fill="rgb(32,28,26)"/>
<rect x="142.0" y="415.1" width="21.1" height="21.1" fill="rgb(38,28,26)"/>
<rect x="162.6" y="415.1" width="21.1" height="21.1" fill="rgb(48,28,26)"/>
<rect x="183.1" y="415.1" width="21.1" height="21.1" fill="rgb(52,28,26)"/>
<rect x="203.7" y="415.1" width="21.1" height="21.1" fill="rgb(86,56,51)"/>
<rect x="224.3" y="415.1" width="21.1" height="21.1" fill="rgb(79,56,51)"/>
<rect x="244.8" y="415.1" width="21.1" height="21.1" fill="rgb(63,28,26)"/>
<rect x="265.4" y="415.1" width="21.1" height="21.1" fill="rgb(68,18,23)"/>
<rect x="286.0" y="415.1" width="21.1" height="21.1" fill="rgb(84,36,46)"/>
<rect x="306.5" y="415.1" width="21.1" height="21.1" fill="rgb(92,36,46)"/>
<rect x="327.1" y="415.1" width="21.1" height="21.1" fill="rgb(105,36,31)"/>
<rect x="347.7" y="415.1" width="21.1" height="21.1" fill="rgb(122,36,31)"/>
<rect x="368.2" y="415.1" width="21.1" height="21.1" fill="rgb(122,36,31)"/>
<rect x="388.8" y="415.1" width="21.1" height="21.1" fill="rgb(122,36,31)"/>
<rect x="409.4" y="415.1" width="21.1" height="21.1" fill="rgb(122,36,31)"/>
<rect x="429.9" y="415.1" width="21.1" height="21.1" fill="rgb(122,36,31)"/>
<rect x="450.5" y="415.1" width="21.1" height="21.1" fill="rgb(122,36,31)"/>
<rect x="471.1" y="415.1" width="21.1" height="21.1" fill="rgb(122,36,31)"/>
<rect x="491.6" y="415.1" width="21.1" height="21.1" fill="rgb(122,36,31)"/>
<rect x="50.3" y="435.7" width="51.1" height="21.1" fill="rgb(36,51,26)"/>
<rect x="100.9" y="435.7" width="21.1" height="21.1" fill="rgb(42,51,26)"/>
<rect x="121.4" y="435.7" width="21.1" height="21.1" fill="rgb(55,51,26)"/>
<rect x="142.0" y="435.7" width="21.1" height="21.1" fill="rgb(55,51,26)"/>
<rect x="162.6" y="435.7" width="21.1" height="21.1" fill="rgb(51,51,26)"/>
<rect x="183.1" y="435.7" width="21.1" height="21.1" fill="rgb(63,51,26)"/>
<rect x="203.7" y="435.7" width="21.1" height="21.1" fill="rgb(86,143,51)"/>
<rect x="224.3" y="435.7" width="21.1" height="21.1" fill="rgb(115,143,51)"/>
<rect x="244.8" y="435.7" width="21.1" height="21.1" fill="rgb(128,143,51)"/>
<rect x="265.4" y="435.7" width="21.1" height="21.1" fill="rgb(128,143,36)"/>
<rect x="286.0" y="435.7" width="21.1" height="21.1" fill="rgb(122,143,36)"/>
<rect x="306.5" y="435.7" width="21.1" height="21.1" fill="rgb(122,143,36)"/>
<rect x="327.1" y="435.7" width="21.1" height="21.1" fill="rgb(128,143,36)"/>
<rect x="347.7" y="435.7" width="21.1" height="21.1" fill="rgb(128,143,36)"/>
<rect x="368.2" y="435.7" width="21.1" height="21.1" fill="rgb(128,143,36)"/>
<rect x="388.8" y="435.7" width="21.1" height="21.1" fill="rgb(128,143,36)"/>
<rect x="409.4" y="435.7" width="21.1" height="21.1" fill="rgb(128,143,36)"/>
<rect x="429.9" y="435.7" width="21.1" height="21.1" fill="rgb(128,143,36)"/>
<rect x="450.5" y="435.7" width="21.1" height="21.1" fill="rgb(128,143,36)"/>
<rect x="471.1" y="435.7" width="21.1" height="21.1" fill="rgb(128,143,36)"/>
<rect x="491.6" y="435.7" width="21.1" height="21.1" fill="rgb(128,143,36)"/>
<rect x="50.3" y="456.3" width="51.1" height="21.1" fill="rgb(41,33,26)"/>
<rect x="100.9" y="456.3" width="21.1" height="21.1" fill="rgb(57,33,26)"/>
<rect x="121.4" y="456.3" width="21.1" height="21.1" fill="rgb(83,66,51)"/>
<rect x="142.0" y="456.3" width="21.1" height="21.1" fill="rgb(92,66,51)"/>
<rect x="162.6" y="456.3" width="21.1" height="21.1" fill="rgb(95,66,51)"/>
<rect x="183.1" y="456.3" width="21.1" height="21.1" fill="rgb(83,66,51)"/>
<rect x="203.7" y="456.3" width="21.1" height="21.1" fill="rgb(86,66,51)"/>
<rect x="224.3" y="456.3" width="21.1" height="21.1" fill="rgb(108,66,51)"/>
<rect x="244.8" y="456.3" width="21.1" height="21.1" fill="rgb(122,66,51)"/>
<rect x="265.4" y="456.3" width="21.1" height="21.1" fill="rgb(95,66,36)"/>
<rect x="286.0" y="456.3" width="21.1" height="21.1" fill="rgb(88,66,36)"/>
<rect x="306.5" y="456.3" width="21.1" height="21.1" fill="rgb(92,66,36)"/>
<rect x="327.1" y="456.3" width="21.1" height="21.1" fill="rgb(122,66,36)"/>
<rect x="347.7" y="456.3" width="21.1" height="21.1" fill="rgb(122,66,36)"/>
<rect x="368.2" y="456.3" width="21.1" height="21.1" fill="rgb(122,66,36)"/>
<rect x="388.8" y="456.3" width="21.1" height="21.1" fill="rgb(122,66,36)"/>
<rect x="409.4" y="456.3" width="21.1" height="21.1" fill="rgb(122,66,36)"/>
<rect x="429.9" y="456.3" width="21.1" height="21.1" fill="rgb(122,66,36)"/>
<rect x="450.5" y="456.3" width="21.1" height="21.1" fill="rgb(122,66,36)"/>
<rect x="471.1" y="456.3" width="21.1" height="21.1" fill="rgb(122,66,36)"/>
<rect x="491.6" y="456.3" width="21.1" height="21.1" fill="rgb(122,66,36)"/>
<rect x="50.3" y="476.8" width="51.1" height="21.1" fill="rgb(51,33,26)"/>
<rect x="100.9" y="476.8" width="21.1" height="21.1" fill="rgb(51,33,26)"/>
<rect x="121.4" y="476.8" width="21.1" height="21.1" fill="rgb(63,33,26)"/>
<rect x="142.0" y="476.8" width="21.1" height="21.1" fill="rgb(63,33,26)"/>
<rect x="162.6" y="476.8" width="21.1" height="21.1" fill="rgb(95,66,51)"/>
<rect x="183.1" y="476.8" width="21.1" height="21.1" fill="rgb(83,66,51)"/>
<rect x="203.7" y="476.8" width="21.1" height="21.1" fill="rgb(95,66,51)"/>
<rect x="224.3" y="476.8" width="21.1" height="21.1" fill="rgb(115,66,51)"/>
<rect x="244.8" y="476.8" width="21.1" height="21.1" fill="rgb(120,66,51)"/>
<rect x="265.4" y="476.8" width="21.1" height="21.1" fill="rgb(115,66,36)"/>
<rect x="286.0" y="476.8" width="21.1" height="21.1" fill="rgb(99,66,36)"/>
<rect x="306.5" y="476.8" width="21.1" height="21.1" fill="rgb(104,66,36)"/>
<rect x="327.1" y="476.8" width="21.1" height="21.1" fill="rgb(122,66,36)"/>
<rect x="347.7" y="476.8" width="21.1" height="21.1" fill="rgb(122,66,36)"/>
<rect x="368.2" y="476.8" width="21.1" height="21.1" fill="rgb(122,66,36)"/>
<rect x="388.8" y="476.8" width="21.1" height="21.1" fill="rgb(122,66,36)"/>
<rect x="409.4" y="476.8" width="21.1" height="21.1" fill="rgb(122,66,36)"/>
<rect x="429.9" y="476.8" width="21.1" height="21.1" fill="rgb(122,66,36)"/>
<rect x="450.5" y="476.8" width="21.1" height="21.1" fill="rgb(122,66,36)"/>
<rect x="471.1" y="476.8" width="21.1" height="21.1" fill="rgb(122,66,36)"/>
<rect x="491.6" y="476.8" width="21.1" height="21.1" fill="rgb(122,66,36)"/>
<rect x="50.3" y="497.4" width="51.1" height="21.1" fill="rgb(42,33,26)"/>
<rect x="100.9" y="497.4" width="21.1" height="21.1" fill="rgb(45,33,26)"/>
<rect x="121.4" y="497.4" width="21.1" height="21.1" fill="rgb(57,33,26)"/>
<rect x="142.0" y="497.4" width="21.1" height="21.1" fill="rgb(104,66,51)"/>
<rect x="162.6" y="497.4" width="21.1" height="21.1" fill="rgb(112,66,51)"/>
<rect x="183.1" y="497.4" width="21.1" height="21.1" fill="rgb(95,66,51)"/>
<rect x="203.7" y="497.4" width="21.1" height="21.1" fill="rgb(106,66,51)"/>
<rect x="224.3" y="497.4" width="21.1" height="21.1" fill="rgb(95,66,51)"/>
<rect x="244.8" y="497.4" width="21.1" height="21.1" fill="rgb(71,33,26)"/>
<rect x="265.4" y="497.4" width="21.1" height="21.1" fill="rgb(99,66,36)"/>
<rect x="286.0" y="497.4" width="21.1" height="21.1" fill="rgb(88,66,36)"/>
<rect x="306.5" y="497.4" width="21.1" height="21.1" fill="rgb(106,66,36)"/>
<rect x="327.1" y="497.4" width="21.1" height="21.1" fill="rgb(106,66,36)"/>
<rect x="347.7" y="497.4" width="21.1" height="21.1" fill="rgb(106,66,36)"/>
<rect x="368.2" y="497.4" width="21.1" height="21.1" fill="rgb(106,66,36)"/>
<rect x="388.8" y="497.4" width="21.1" height="21.1" fill="rgb(106,66,36)"/>
<rect x="409.4" y="497.4" width="21.1" height="21.1" fill="rgb(106,66,36)"/>
<rect x="429.9" y="497.4" width="21.1" height="21.1" fill="rgb(106,66,36)"/>
<rect x="450.5" y="497.4" width="21.1" height="21.1" fill="rgb(106,66,36)"/>
<rect x="471.1" y="497.4" width="21.1" height="21.1" fill="rgb(106,66,36)"/>
<rect x="491.6" y="497.4" width="21.1" height="21.1" fill="rgb(106,66,36)"/>
<rect x="50.3" y="518.0" width="51.1" height="21.1" fill="rgb(42,33,26)"/>
<rect x="100.9" y="518.0" width="21.1" height="21.1" fill="rgb(128,66,51)"/>
<rect x="121.4" y="518.0" width="21.1" height="21.1" fill="rgb(115,66,51)"/>
<rect x="142.0" y="518.0" width="21.1" height="21.1" fill="rgb(115,66,51)"/>
<rect x="162.6" y="518.0" width="21.1" height="21.1" fill="rgb(101,66,51)"/>
<rect x="183.1" y="518.0" width="21.1" height="21.1" fill="rgb(75,33,26)"/>
<rect x="203.7" y="518.0" width="21.1" height="21.1" fill="rgb(61,33,26)"/>
<rect x="224.3" y="518.0" width="21.1" height="21.1" fill="rgb(61,33,26)"/>
<rect x="244.8" y="518.0" width="21.1" height="21.1" fill="rgb(66,33,26)"/>
<rect x="265.4" y="518.0" width="21.1" height="21.1" fill="rgb(92,66,36)"/>
<rect x="286.0" y="518.0" width="21.1" height="21.1" fill="rgb(101,66,36)"/>
<rect x="306.5" y="518.0" width="21.1" height="21.1" fill="rgb(103,66,36)"/>
<rect x="327.1" y="518.0" width="21.1" height="21.1" fill="rgb(103,66,36)"/>
<rect x="347.7" y="518.0" width="21.1" height="21.1" fill="rgb(103,66,36)"/>
<rect x="368.2" y="518.0" width="21.1" height="21.1" fill="rgb(103,66,36)"/>
<rect x="388.8" y="518.0" width="21.1" height="21.1" fill="rgb(103,66,36)"/>
<rect x="409.4" y="518.0" width="21.1" height="21.1" fill="rgb(103,66,36)"/>
<rect x="429.9" y="518.0" width="21.1" height="21.1" fill="rgb(103,66,36)"/>
<rect x="450.5" y="518.0" width="21.1" height="21.1" fill="rgb(103,66,36)"/>
<rect x="471.1" y="518.0" width="21.1" height="21.1" fill="rgb(103,66,36)"/>
<rect x="491.6" y="518.0" width="21.1" height="21.1" fill="rgb(103,66,36)"/>
<rect x="50.3" y="538.5" width="51.1" height="21.1" fill="rgb(51,33,26)"/>
<rect x="100.9" y="538.5" width="21.1" height="21.1" fill="rgb(95,66,51)"/>
<rect x="121.4" y="538.5" width="21.1" height="21.1" fill="rgb(101,66,51)"/>
<rect x="142.0" y="538.5" width="21.1" height="21.1" fill="rgb(120,66,51)"/>
<rect x="162.6" y="538.5" width="21.1" height="21.1" fill="rgb(104,66,51)"/>
<rect x="183.1" y="538.5" width="21.1" height="21.1" fill="rgb(61,33,26)"/>
<rect x="203.7" y="538.5" width="21.1" height="21.1" fill="rgb(68,33,26)"/>
<rect x="224.3" y="538.5" width="21.1" height="21.1" fill="rgb(92,66,51)"/>
<rect x="244.8" y="538.5" width="21.1" height="21.1" fill="rgb(92,66,51)"/>
<rect x="265.4" y="538.5" width="21.1" height="21.1" fill="rgb(85,66,36)"/>
<rect x="286.0" y="538.5" width="21.1" height="21.1" fill="rgb(108,66,36)"/>
<rect x="306.5" y="538.5" width="21.1" height="21.1" fill="rgb(108,66,36)"/>
<rect x="327.1" y="538.5" width="21.1" height="21.1" fill="rgb(108,66,36)"/>
<rect x="347.7" y="538.5" width="21.1" height="21.1" fill="rgb(108,66,36)"/>
<rect x="368.2" y="538.5" width="21.1" height="21.1" fill="rgb(108,66,36)"/>
<rect x="388.8" y="538.5" width="21.1" height="21.1" fill="rgb(108,66,36)"/>
<rect x="409.4" y="538.5" width="21.1" height="21.1" fill="rgb(108,66,36)"/>
<rect x="429.9" y="538.5" width="21.1" height="21.1" fill="rgb(108,66,36)"/>
<rect x="450.5" y="538.5" width="21.1" height="21.1" fill="rgb(108,66,36)"/>
<rect x="471.1" y="538.5" width="21.1" height="21.1" fill="rgb(108,66,36)"/>
<rect x="491.6" y="538.5" width="21.1" height="21.1" fill="rgb(108,66,36)"/>
<rect x="50.3" y="559.1" width="51.1" height="21.1" fill="rgb(110,92,51)"/>
<rect x="100.9" y="559.1" width="21.1" height="21.1" fill="rgb(57,46,26)"/>
<rect x="121.4" y="559.1" width="21.1" height="21.1" fill="rgb(57,46,26)"/>
<rect x="142.0" y="559.1" width="21.1" height="21.1" fill="rgb(86,92,51)"/>
<rect x="162.6" y="559.1" width="21.1" height="21.1" fill="rgb(95,71,51)"/>
<rect x="183.1" y="559.1" width="21.1" height="21.1" fill="rgb(75,36,26)"/>
<rect x="203.7" y="559.1" width="21.1" height="21.1" fill="rgb(63,36,26)"/>
<rect x="224.3" y="559.1" width="21.1" height="21.1" fill="rgb(61,36,26)"/>
<rect x="244.8" y="559.1" width="21.1" height="21.1" fill="rgb(66,36,26)"/>
<rect x="265.4" y="559.1" width="21.1" height="21.1" fill="rgb(110,71,51)"/>
<rect x="286.0" y="559.1" width="21.1" height="21.1" fill="rgb(128,71,51)"/>
<rect x="306.5" y="559.1" width="21.1" height="21.1" fill="rgb(128,71,51)"/>
<rect x="327.1" y="559.1" width="21.1" height="21.1" fill="rgb(128,71,51)"/>
<rect x="347.7" y="559.1" width="21.1" height="21.1" fill="rgb(128,71,51)"/>
<rect x="368.2" y="559.1" width="21.1" height="21.1" fill="rgb(128,71,51)"/>
<rect x="388.8" y="559.1" width="21.1" height="21.1" fill="rgb(128,71,51)"/>
<rect x="409.4" y="559.1" width="21.1" height="21.1" fill="rgb(128,71,51)"/>
<rect x="429.9" y="559.1" width="21.1" height="21.1" fill="rgb(128,71,51)"/>
<rect x="450.5" y="559.1" width="21.1" height="21.1" fill="rgb(128,71,51)"/>
<rect x="471.1" y="559.1" width="21.1" height="21.1" fill="rgb(128,71,51)"/>
<rect x="491.6" y="559.1" width="21.1" height="21.1" fill="rgb(128,71,51)"/>
<rect x="50.3" y="579.7" width="51.1" height="21.1" fill="rgb(57,46,26)"/>
<rect x="100.9" y="579.7" width="21.1" height="21.1" fill="rgb(86,92,51)"/>
<rect x="121.4" y="579.7" width="21.1" height="21.1" fill="rgb(148,92,51)"/>
<rect x="142.0" y="579.7" width="21.1" height="21.1" fill="rgb(140,92,51)"/>
<rect x="162.6" y="579.7" width="21.1" height="21.1" fill="rgb(135,71,51)"/>
<rect x="183.1" y="579.7" width="21.1" height="21.1" fill="rgb(95,71,51)"/>
<rect x="203.7" y="579.7" width="21.1" height="21.1" fill="rgb(115,71,51)"/>
<rect x="224.3" y="579.7" width="21.1" height="21.1" fill="rgb(92,71,51)"/>
<rect x="244.8" y="579.7" width="21.1" height="21.1" fill="rgb(83,71,51)"/>
<rect x="265.4" y="579.7" width="21.1" height="21.1" fill="rgb(128,71,51)"/>
<rect x="286.0" y="579.7" width="21.1" height="21.1" fill="rgb(128,71,51)"/>
<rect x="306.5" y="579.7" width="21.1" height="21.1" fill="rgb(128,71,51)"/>
<rect x="327.1" y="579.7" width="21.1" height="21.1" fill="rgb(128,71,51)"/>
<rect x="347.7" y="579.7" width="21.1" height="21.1" fill="rgb(128,71,51)"/>
<rect x="368.2" y="579.7" width="21.1" height="21.1" fill="rgb(128,71,51)"/>
<rect x="388.8" y="579.7" width="21.1" height="21.1" fill="rgb(128,71,51)"/>
<rect x="409.4" y="579.7" width="21.1" height="21.1" fill="rgb(128,71,51)"/>
<rect x="429.9" y="579.7" width="21.1" height="21.1" fill="rgb(128,71,51)"/>
<rect x="450.5" y="579.7" width="21.1" height="21.1" fill="rgb(128,71,51)"/>
<rect x="471.1" y="579.7" width="21.1" height="21.1" fill="rgb(128,71,51)"/>
<rect x="491.6" y="579.7" width="21.1" height="21.1" fill="rgb(128,71,51)"/>
<rect x="50.3" y="600.2" width="51.1" height="21.1" fill="rgb(115,92,51)"/>
<rect x="100.9" y="600.2" width="21.1" height="21.1" fill="rgb(140,92,51)"/>
<rect x="121.4" y="600.2" width="21.1" height="21.1" fill="rgb(161,92,51)"/>
<rect x="142.0" y="600.2" width="21.1" height="21.1" fill="rgb(128,92,51)"/>
<rect x="162.6" y="600.2" width="21.1" height="21.1" fill="rgb(95,71,51)"/>
<rect x="183.1" y="600.2" width="21.1" height="21.1" fill="rgb(86,71,51)"/>
<rect x="203.7" y="600.2" width="21.1" height="21.1" fill="rgb(115,71,51)"/>
<rect x="224.3" y="600.2" width="21.1" height="21.1" fill="rgb(95,71,51)"/>
<rect x="244.8" y="600.2" width="21.1" height="21.1" fill="rgb(95,71,51)"/>
<rect x="265.4" y="600.2" width="21.1" height="21.1" fill="rgb(110,71,51)"/>
<rect x="286.0" y="600.2" width="21.1" height="21.1" fill="rgb(110,71,51)"/>
<rect x="306.5" y="600.2" width="21.1" height="21.1" fill="rgb(110,71,51)"/>
<rect x="327.1" y="600.2" width="21.1" height="21.1" fill="rgb(110,71,51)"/>
<rect x="347.7" y="600.2" width="21.1" height="21.1" fill="rgb(110,71,51)"/>
<rect x="368.2" y="600.2" width="21.1" height="21.1" fill="rgb(110,71,51)"/>
<rect x="388.8" y="600.2" width="21.1" height="21.1" fill="rgb(110,71,51)"/>
<rect x="409.4" y="600.2" width="21.1" height="21.1" fill="rgb(110,71,51)"/>
<rect x="429.9" y="600.2" width="21.1" height="21.1" fill="rgb(110,71,51)"/>
<rect x="450.5" y="600.2" width="21.1" height="21.1" fill="rgb(110,71,51)"/>
<rect x="471.1" y="600.2" width="21.1" height="21.1" fill="rgb(110,71,51)"/>
<rect x="491.6" y="600.2" width="21.1" height="21.1" fill="rgb(110,71,51)"/>
<rect x="50.3" y="620.8" width="51.1" height="21.1" fill="rgb(148,92,51)"/>
<rect x="100.9" y="620.8" width="21.1" height="21.1" fill="rgb(173,92,51)"/>
<rect x="121.4" y="620.8" width="21.1" height="21.1" fill="rgb(135,92,51)"/>
<rect x="142.0" y="620.8" width="21.1" height="21.1" fill="rgb(95,92,51)"/>
<rect x="162.6" y="620.8" width="21.1" height="21.1" fill="rgb(75,36,26)"/>
<rect x="183.1" y="620.8" width="21.1" height="21.1" fill="rgb(75,36,26)"/>
<rect x="203.7" y="620.8" width="21.1" height="21.1" fill="rgb(75,36,26)"/>
<rect x="224.3" y="620.8" width="21.1" height="21.1" fill="rgb(68,36,26)"/>
<rect x="244.8" y="620.8" width="21.1" height="21.1" fill="rgb(95,71,51)"/>
<rect x="265.4" y="620.8" width="21.1" height="21.1" fill="rgb(115,71,51)"/>
<rect x="286.0" y="620.8" width="21.1" height="21.1" fill="rgb(115,71,51)"/>
<rect x="306.5" y="620.8" width="21.1" height="21.1" fill="rgb(115,71,51)"/>
<rect x="327.1" y="620.8" width="21.1" height="21.1" fill="rgb(115,71,51)"/>
<rect x="347.7" y="620.8" width="21.1" height="21.1" fill="rgb(115,71,51)"/>
<rect x="368.2" y="620.8" width="21.1" height="21.1" fill="rgb(115,71,51)"/>
<rect x="388.8" y="620.8" width="21.1" height="21.1" fill="rgb(115,71,51)"/>
<rect x="409.4" y="620.8" width="21.1" height="21.1" fill="rgb(115,71,51)"/>
<rect x="429.9" y="620.8" width="21.1" height="21.1" fill="rgb(115,71,51)"/>
<rect x="450.5" y="620.8" width="21.1" height="21.1" fill="rgb(115,71,51)"/>
<rect x="471.1" y="620.8" width="21.1" height="21.1" fill="rgb(115,71,51)"/>
<rect x="491.6" y="620.8" width="21.1" height="21.1" fill="rgb(115,71,51)"/>
<rect x="50.3" y="641.4" width="51.1" height="21.1" fill="rgb(161,92,51)"/>
<rect x="100.9" y="641.4" width="21.1" height="21.1" fill="rgb(166,92,51)"/>
<rect x="121.4" y="641.4" width="21.1" height="21.1" fill="rgb(135,92,51)"/>
<rect x="142.0" y="641.4" width="21.1" height="21.1" fill="rgb(104,92,51)"/>
<rect x="162.6" y="641.4" width="21.1" height="21.1" fill="rgb(86,71,51)"/>
<rect x="183.1" y="641.4" width="21.1" height="21.1" fill="rgb(86,71,51)"/>
<rect x="203.7" y="641.4" width="21.1" height="21.1" fill="rgb(75,36,26)"/>
<rect x="224.3" y="641.4" width="21.1" height="21.1" fill="rgb(115,71,51)"/>
<rect x="244.8" y="641.4" width="21.1" height="21.1" fill="rgb(104,71,51)"/>
<rect x="265.4" y="641.4" width="21.1" height="21.1" fill="rgb(104,71,51)"/>
<rect x="286.0" y="641.4" width="21.1" height="21.1" fill="rgb(104,71,51)"/>
<rect x="306.5" y="641.4" width="21.1" height="21.1" fill="rgb(104,71,51)"/>
<rect x="327.1" y="641.4" width="21.1" height="21.1" fill="rgb(104,71,51)"/>
<rect x="347.7" y="641.4" width="21.1" height="21.1" fill="rgb(104,71,51)"/>
<rect x="368.2" y="641.4" width="21.1" height="21.1" fill="rgb(104,71,51)"/>
<rect x="388.8" y="641.4" width="21.1" height="21.1" fill="rgb(104,71,51)"/>
<rect x="409.4" y="641.4" width="21.1" height="21.1" fill="rgb(104,71,51)"/>
<rect x="429.9" y="641.4" width="21.1" height="21.1" fill="rgb(104,71,51)"/>
<rect x="450.5" y="641.4" width="21.1" height="21.1" fill="rgb(104,71,51)"/>
<rect x="471.1" y="641.4" width="21.1" height="21.1" fill="rgb(104,71,51)"/>
<rect x="491.6" y="641.4" width="21.1" height="21.1" fill="rgb(104,71,51)"/>
<rect x="50.3" y="661.9" width="51.1" height="21.1" fill="rgb(161,92,51)"/>
<rect x="100.9" y="661.9" width="21.1" height="21.1" fill="rgb(153,92,51)"/>
<rect x="121.4" y="661.9" width="21.1" height="21.1" fill="rgb(133,92,51)"/>
<rect x="142.0" y="661.9" width="21.1" height="21.1" fill="rgb(104,92,51)"/>
<rect x="162.6" y="661.9" width="21.1" height="21.1" fill="rgb(83,71,51)"/>
<rect x="183.1" y="661.9" width="21.1" height="21.1" fill="rgb(83,71,51)"/>
<rect x="203.7" y="661.9" width="21.1" height="21.1" fill="rgb(95,71,51)"/>
<rect x="224.3" y="661.9" width="21.1" height="21.1" fill="rgb(75,36,26)"/>
<rect x="244.8" y="661.9" width="21.1" height="21.1" fill="rgb(86,71,51)"/>
<rect x="265.4" y="661.9" width="21.1" height="21.1" fill="rgb(86,71,51)"/>
<rect x="286.0" y="661.9" width="21.1" height="21.1" fill="rgb(86,71,51)"/>
<rect x="306.5" y="661.9" width="21.1" height="21.1" fill="rgb(86,71,51)"/>
<rect x="327.1" y="661.9" width="21.1" height="21.1" fill="rgb(86,71,51)"/>
<rect x="347.7" y="661.9" width="21.1" height="21.1" fill="rgb(86,71,51)"/>
<rect x="368.2" y="661.9" width="21.1" height="21.1" fill="rgb(86,71,51)"/>
<rect x="388.8" y="661.9" width="21.1" height="21.1" fill="rgb(86,71,51)"/>
<rect x="409.4" y="661.9" width="21.1" height="21.1" fill="rgb(86,71,51)"/>
<rect x="429.9" y="661.9" width="21.1" height="21.1" fill="rgb(86,71,51)"/>
<rect x="450.5" y="661.9" width="21.1" height="21.1" fill="rgb(86,71,51)"/>
<rect x="471.1" y="661.9" width="21.1" height="21.1" fill="rgb(86,71,51)"/>
<rect x="491.6" y="661.9" width="21.1" height="21.1" fill="rgb(86,71,51)"/>
<rect x="50.3" y="682.5" width="51.1" height="21.1" fill="rgb(148,92,51)"/>
<rect x="100.9" y="682.5" width="21.1" height="21.1" fill="rgb(145,92,51)"/>
<rect x="121.4" y="682.5" width="21.1" height="21.1" fill="rgb(145,92,51)"/>
<rect x="142.0" y="682.5" width="21.1" height="21.1" fill="rgb(110,92,51)"/>
<rect x="162.6" y="682.5" width="21.1" height="21.1" fill="rgb(110,71,51)"/>
<rect x="183.1" y="682.5" width="21.1" height="21.1" fill="rgb(92,71,51)"/>
<rect x="203.7" y="682.5" width="21.1" height="21.1" fill="rgb(104,71,51)"/>
<rect x="224.3" y="682.5" width="21.1" height="21.1" fill="rgb(88,71,51)"/>
<rect x="244.8" y="682.5" width="21.1" height="21.1" fill="rgb(88,71,51)"/>
<rect x="265.4" y="682.5" width="21.1" height="21.1" fill="rgb(88,71,51)"/>
<rect x="286.0" y="682.5" width="21.1" height="21.1" fill="rgb(88,71,51)"/>
<rect x="306.5" y="682.5" width="21.1" height="21.1" fill="rgb(88,71,51)"/>
<rect x="327.1" y="682.5" width="21.1" height="21.1" fill="rgb(88,71,51)"/>
<rect x="347.7" y="682.5" width="21.1" height="21.1" fill="rgb(88,71,51)"/>
<rect x="368.2" y="682.5" width="21.1" height="21.1" fill="rgb(88,71,51)"/>
<rect x="388.8" y="682.5" width="21.1" height="21.1" fill="rgb(88,71,51)"/>
<rect x="409.4" y="682.5" width="21.1" height="21.1" fill="rgb(88,71,51)"/>
<rect x="429.9" y="682.5" width="21.1" height="21.1" fill="rgb(88,71,51)"/>
<rect x="450.5" y="682.5" width="21.1" height="21.1" fill="rgb(88,71,51)"/>
<rect x="471.1" y="682.5" width="21.1" height="21.1" fill="rgb(88,71,51)"/>
<rect x="491.6" y="682.5" width="21.1" height="21.1" fill="rgb(88,71,51)"/>
<rect x="50.3" y="703.1" width="51.1" height="51.1" fill="rgb(135,92,51)"/>
<rect x="100.9" y="703.1" width="21.1" height="51.1" fill="rgb(135,92,51)"/>
<rect x="121.4" y="703.1" width="21.1" height="51.1" fill="rgb(133,92,51)"/>
<rect x="142.0" y="703.1" width="21.1" height="51.1" fill="rgb(110,92,51)"/>
<rect x="162.6" y="703.1" width="21.1" height="51.1" fill="rgb(92,71,51)"/>
<rect x="183.1" y="703.1" width="21.1" height="51.1" fill="rgb(71,36,26)"/>
<rect x="203.7" y="703.1" width="21.1" height="51.1" fill="rgb(86,71,51)"/>
<rect x="224.3" y="703.1" width="21.1" height="51.1" fill="rgb(86,71,51)"/>
<rect x="244.8" y="703.1" width="21.1" height="51.1" fill="rgb(86,71,51)"/>
<rect x="265.4" y="703.1" width="21.1" height="51.1" fill="rgb(86,71,51)"/>
<rect x="286.0" y="703.1" width="21.1" height="51.1" fill="rgb(86,71,51)"/>
<rect x="306.5" y="703.1" width="21.1" height="51.1" fill="rgb(86,71,51)"/>
<rect x="327.1" y="703.1" width="21.1" height="51.1" fill="rgb(86,71,51)"/>
<rect x="347.7" y="703.1" width="21.1" height="51.1" fill="rgb(86,71,51)"/>
<rect x="368.2" y="703.1" width="21.1" height="51.1" fill="rgb(86,71,51)"/>
<rect x="388.8" y="703.1" width="21.1" height="51.1" fill="rgb(86,71,51)"/>
<rect x="409.4" y="703.1" width="21.1" height="51.1" fill="rgb(86,71,51)"/>
<rect x="429.9" y="703.1" width="21.1" height="51.1" fill="rgb(86,71,51)"/>
<rect x="450.5" y="703.1" width="21.1" height="51.1" fill="rgb(86,71,51)"/>
<rect x="471.1" y="703.1" width="21.1" height="51.1" fill="rgb(86,71,51)"/>
<rect x="491.6" y="703.1" width="21.1" height="51.1" fill="rgb(86,71,51)"/>
</g>
<g filter="url(#b2)">
<ellipse cx="194" cy="237" rx="10" ry="10" transform="rotate(0 194 237)" fill="rgb(115,36,66)"/>
<ellipse cx="210" cy="236" rx="5" ry="8" transform="rotate(0 210 236)" fill="rgb(102,36,66)"/>
<ellipse cx="227" cy="239" rx="10" ry="9" transform="rotate(0 227 239)" fill="rgb(110,36,66)"/>
<ellipse cx="210" cy="256" rx="5" ry="5" transform="rotate(0 210 256)" fill="rgb(102,36,66)"/>
<ellipse cx="90" cy="273" rx="9" ry="8" transform="rotate(0 90 273)" fill="rgb(89,36,66)"/>
<ellipse cx="111" cy="272" rx="10" ry="9" transform="rotate(0 111 272)" fill="rgb(128,36,66)"/>
<ellipse cx="123" cy="295" rx="6" ry="4" transform="rotate(0 123 295)" fill="rgb(84,36,66)"/>
<ellipse cx="158" cy="291" rx="8" ry="8" transform="rotate(0 158 291)" fill="rgb(102,36,66)"/>
<ellipse cx="185" cy="296" rx="16" ry="10" transform="rotate(0 185 296)" fill="rgb(102,36,66)"/>
<ellipse cx="167" cy="319" rx="6" ry="6" transform="rotate(0 167 319)" fill="rgb(102,36,66)"/>
<ellipse cx="153" cy="326" rx="9" ry="4" transform="rotate(0 153 326)" fill="rgb(89,36,66)"/>
<ellipse cx="130" cy="320" rx="10" ry="5" transform="rotate(0 130 320)" fill="rgb(84,36,66)"/>
<ellipse cx="95" cy="356" rx="14" ry="15" transform="rotate(0 95 356)" fill="rgb(115,36,66)"/>
<ellipse cx="129" cy="345" rx="10" ry="6" transform="rotate(0 129 345)" fill="rgb(84,36,66)"/>
<ellipse cx="136" cy="364" rx="5" ry="7" transform="rotate(0 136 364)" fill="rgb(89,36,66)"/>
<ellipse cx="184" cy="367" rx="17" ry="4" transform="rotate(0 184 367)" fill="rgb(84,36,66)"/>
<ellipse cx="190" cy="354" rx="6" ry="5" transform="rotate(0 190 354)" fill="rgb(89,36,66)"/>
<ellipse cx="221" cy="347" rx="15" ry="9" transform="rotate(0 221 347)" fill="rgb(84,36,66)"/>
<ellipse cx="90" cy="389" rx="9" ry="13" transform="rotate(0 90 389)" fill="rgb(84,36,66)"/>
<ellipse cx="163" cy="413" rx="18" ry="9" transform="rotate(0 163 413)" fill="rgb(115,36,66)"/>
<ellipse cx="148" cy="378" rx="5" ry="3.5" transform="rotate(0 148 378)" fill="rgb(89,36,66)"/>
<ellipse cx="119" cy="400" rx="20" ry="3" transform="rotate(20 119 400)" fill="rgb(89,36,66)"/>
<ellipse cx="189.5" cy="85" rx="5.95" ry="5.1" transform="rotate(0 189.5 85)" fill="rgb(242,92,51)"/>
<ellipse cx="189" cy="110" rx="7.6499999999999995" ry="10.2" transform="rotate(20 189 110)" fill="rgb(242,92,51)"/>
<ellipse cx="225" cy="103" rx="16.15" ry="5.95" transform="rotate(-25 225 103)" fill="rgb(242,92,51)"/>
<ellipse cx="238" cy="119" rx="8.5" ry="5.1" transform="rotate(-30 238 119)" fill="rgb(242,92,51)"/>
<ellipse cx="162" cy="84" rx="5.1" ry="2.975" transform="rotate(0 162 84)" fill="rgb(242,92,51)"/>
<ellipse cx="158" cy="103" rx="5.1" ry="2.975" transform="rotate(0 158 103)" fill="rgb(242,92,51)"/>
<ellipse cx="181" cy="56.6" rx="4.25" ry="5.1" transform="rotate(0 181 56.6)" fill="rgb(242,92,51)"/>
<ellipse cx="259" cy="53.4" rx="6.8" ry="6.8" transform="rotate(0 259 53.4)" fill="rgb(242,92,51)"/>
<ellipse cx="275" cy="98" rx="5.1" ry="8.5" transform="rotate(0 275 98)" fill="rgb(242,92,51)"/>
<ellipse cx="100" cy="94" rx="3.4" ry="2.975" transform="rotate(0 100 94)" fill="rgb(222,92,51)"/>
<ellipse cx="275" cy="53" rx="4.25" ry="5.1" transform="rotate(0 275 53)" fill="rgb(242,92,51)"/>
<ellipse cx="299.5" cy="62" rx="6.8" ry="5.1" transform="rotate(0 299.5 62)" fill="rgb(242,92,51)"/>
<ellipse cx="291" cy="85" rx="6.8" ry="11.9" transform="rotate(20 291 85)" fill="rgb(242,92,51)"/>
<ellipse cx="310" cy="92" rx="6.8" ry="9.35" transform="rotate(0 310 92)" fill="rgb(242,92,51)"/>
<ellipse cx="306" cy="105" rx="5.1" ry="4.25" transform="rotate(0 306 105)" fill="rgb(242,92,51)"/>
<ellipse cx="364" cy="56.6" rx="4.25" ry="4.25" transform="rotate(0 364 56.6)" fill="rgb(242,92,51)"/>
<ellipse cx="381.6" cy="54.5" rx="5.1" ry="5.1" transform="rotate(0 381.6 54.5)" fill="rgb(242,92,51)"/>
<ellipse cx="411" cy="55.5" rx="8.5" ry="5.1" transform="rotate(0 411 55.5)" fill="rgb(242,92,51)"/>
<ellipse cx="394" cy="58.7" rx="4.25" ry="4.25" transform="rotate(0 394 58.7)" fill="rgb(242,92,51)"/>
<ellipse cx="348" cy="58.7" rx="4.25" ry="4.25" transform="rotate(0 348 58.7)" fill="rgb(242,92,51)"/>
<ellipse cx="423" cy="100" rx="12.75" ry="10.2" transform="rotate(0 423 100)" fill="rgb(242,92,51)"/>
<ellipse cx="328" cy="69" rx="15" ry="17" transform="rotate(0 328 69)" fill="rgb(70,8,10)"/>
<ellipse cx="370" cy="80" rx="30" ry="13" transform="rotate(0 370 80)" fill="rgb(79,51,51)"/>
<ellipse cx="350" cy="95.5" rx="4" ry="4" transform="rotate(0 350 95.5)" fill="rgb(57,26,26)"/>
<ellipse cx="372" cy="95.5" rx="3" ry="4" transform="rotate(0 372 95.5)" fill="rgb(57,26,26)"/>
<ellipse cx="304" cy="50" rx="17" ry="5" transform="rotate(0 304 50)" fill="rgb(70,8,10)"/>
<ellipse cx="276" cy="70" rx="6" ry="8" transform="rotate(0 276 70)" fill="rgb(64,26,26)"/>
<ellipse cx="118" cy="627" rx="11.049999999999999" ry="2.21" transform="rotate(-25 118 627)" fill="rgb(237,92,51)"/>
<ellipse cx="99" cy="656" rx="11.9" ry="2.04" transform="rotate(-40 99 656)" fill="rgb(237,92,51)"/>
<ellipse cx="110" cy="672" rx="10.2" ry="1.87" transform="rotate(-60 110 672)" fill="rgb(232,92,51)"/>
<ellipse cx="144" cy="695" rx="10.2" ry="2.04" transform="rotate(-35 144 695)" fill="rgb(237,92,51)"/>
<ellipse cx="290" cy="452" rx="50" ry="7" transform="rotate(3 290 452)" fill="rgb(145,51,51)"/>
<ellipse cx="255" cy="450" rx="22" ry="3" transform="rotate(8 255 450)" fill="rgb(178,51,51)"/>
<ellipse cx="283" cy="455" rx="10.2" ry="1.87" transform="rotate(0 283 455)" fill="rgb(237,92,51)"/>
<ellipse cx="317" cy="453" rx="3.4" ry="3.4" transform="rotate(0 317 453)" fill="rgb(237,92,51)"/>
<ellipse cx="336" cy="451.5" rx="5.95" ry="1.7" transform="rotate(0 336 451.5)" fill="rgb(232,92,51)"/>
<ellipse cx="192" cy="546" rx="9" ry="8" transform="rotate(0 192 546)" fill="rgb(45,26,26)"/>
<ellipse cx="190" cy="515" rx="7" ry="3" transform="rotate(0 190 515)" fill="rgb(45,26,26)"/>
<ellipse cx="122" cy="534" rx="14" ry="7" transform="rotate(0 122 534)" fill="rgb(166,51,51)"/>
<ellipse cx="119" cy="577.5" rx="12" ry="7" transform="rotate(0 119 577.5)" fill="rgb(34,26,26)"/>
<ellipse cx="162" cy="593" rx="18" ry="11" transform="rotate(0 162 593)" fill="rgb(143,51,51)"/>
<ellipse cx="338" cy="318" rx="10" ry="16" transform="rotate(0 338 318)" fill="rgb(70,8,10)"/>
<ellipse cx="338" cy="197" rx="11" ry="10" transform="rotate(0 338 197)" fill="rgb(70,8,10)"/>
<ellipse cx="333" cy="343" rx="6" ry="6" transform="rotate(0 333 343)" fill="rgb(70,8,10)"/>
<ellipse cx="313" cy="255" rx="11" ry="6" transform="rotate(0 313 255)" fill="rgb(70,8,10)"/>
<ellipse cx="311" cy="222" rx="7" ry="20" transform="rotate(0 311 222)" fill="rgb(70,8,10)"/>
<ellipse cx="300" cy="242" rx="6" ry="8" transform="rotate(0 300 242)" fill="rgb(70,8,10)"/>
<ellipse cx="212" cy="262.0" rx="14" ry="1.8" transform="rotate(42 212 262.0)" fill="rgb(105,36,66)"/>
<ellipse cx="221" cy="265.5" rx="14" ry="1.8" transform="rotate(42 221 265.5)" fill="rgb(105,36,66)"/>
<ellipse cx="230" cy="269.0" rx="14" ry="1.8" transform="rotate(42 230 269.0)" fill="rgb(105,36,66)"/>
<ellipse cx="239" cy="272.5" rx="14" ry="1.8" transform="rotate(42 239 272.5)" fill="rgb(105,36,66)"/>
<ellipse cx="248" cy="270" rx="14" ry="1.8" transform="rotate(42 248 270)" fill="rgb(105,36,66)"/>
<ellipse cx="257" cy="276" rx="14" ry="1.8" transform="rotate(42 257 276)" fill="rgb(105,36,66)"/>
<ellipse cx="266" cy="282" rx="14" ry="1.8" transform="rotate(42 266 282)" fill="rgb(105,36,66)"/>
<ellipse cx="215" cy="290" rx="13" ry="1.8" transform="rotate(42 215 290)" fill="rgb(105,36,66)"/>
<ellipse cx="225" cy="292" rx="13" ry="1.8" transform="rotate(42 225 292)" fill="rgb(105,36,66)"/>
<ellipse cx="235" cy="294" rx="13" ry="1.8" transform="rotate(42 235 294)" fill="rgb(105,36,66)"/>
<ellipse cx="245" cy="296" rx="13" ry="1.8" transform="rotate(42 245 296)" fill="rgb(105,36,66)"/>
<ellipse cx="255" cy="298" rx="13" ry="1.8" transform="rotate(42 255 298)" fill="rgb(105,36,66)"/>
<ellipse cx="168" cy="262" rx="10" ry="1.8" transform="rotate(42 168 262)" fill="rgb(97,36,66)"/>
<ellipse cx="179" cy="265" rx="10" ry="1.8" transform="rotate(42 179 265)" fill="rgb(97,36,66)"/>
<ellipse cx="190" cy="268" rx="10" ry="1.8" transform="rotate(42 190 268)" fill="rgb(97,36,66)"/>
</g>
</g></g>
<rect x="437" y="139" width="13" height="49" fill="rgb(138,43,226)"/>
<rect x="450" y="126" width="12" height="38" fill="rgb(138,43,226)"/>
<path d="M79.0 65.5H128.3M158.2 65.5H189.3M218.8 65.5H251.3M280.3 65.5H313.3M341.3 65.5H375.3M404.3 65.5H444.1M452.2 65.5H498.9M527.5 65.5H560.8M589.4 65.5H619.0M652.1 65.5H680.9M714.0 65.5H743.0M776.1 65.5H804.9M838.0 65.5H863.0M901.2 65.5H944.0M79.0 127.5H873.9M895.9 127.5H944.0M79.0 188.5H868.2M890.2 188.5H944.0M79.0 250.5H871.1M899.0 250.5H944.0M79.0 312.5H868.2M899.0 312.5H944.0M79.0 374.5H869.0M902.0 374.5H944.0M79.0 435.5H868.5M902.5 435.5H944.0M79.0 497.5H868.5M902.5 497.5H944.0M79.0 559.5H868.5M902.5 559.5H944.0M79.0 620.5H864.9M904.9 620.5H944.0M79.0 682.5H864.9M904.9 682.5H944.0M79.5 65.5V682.5M141.5 71.5V682.5M202.5 71.5V682.5M264.5 71.5V682.5M326.5 71.5V682.5M388.5 71.5V682.5M449.5 71.5V682.5M511.5 71.5V682.5M573.5 71.5V682.5M634.5 71.5V682.5M696.5 71.5V682.5M758.5 71.5V682.5M820.5 71.5V682.5M881.5 71.5V120.5M881.5 131.5V181.5M881.5 192.5V243.5M881.5 254.5V305.5M881.5 316.5V367.5M881.5 378.5V428.5M881.5 439.5V490.5M881.5 501.5V552.5M881.5 563.5V613.5M881.5 624.5V675.5M943.5 65.5V682.5" stroke="#00ffff" stroke-width="1" fill="none" shape-rendering="crispEdges"/>
<path d="M259.0 46.0 L261.0 47.0 L260.0 49.0 L263.0 50.0 L265.0 53.0 L267.0 54.0 L270.0 58.0 L274.0 61.0 L278.0 65.0 L281.0 68.0 L283.0 70.0 L285.0 76.0 L286.6 82.8 L287.0 86.0 L289.0 88.0 L291.0 92.0 L296.0 96.0 L301.7 100.0 L309.0 103.0 L315.6 107.0 L321.0 112.0 L327.0 117.6 L332.0 122.0 L336.4 125.7 L342.0 129.0 L348.0 131.5 L353.0 134.0 L357.0 135.0 L363.0 132.5 L368.8 130.3 L373.0 128.0 L378.0 126.8 L384.0 126.5 L389.7 126.0 L398.0 125.5 L408.0 125.0 L414.0 126.0 L419.8 127.5 L423.0 128.5 L425.0 130.0 L427.0 128.0 L429.0 127.5 L436.0 125.0 L443.0 122.0 L450.0 118.7 L456.0 117.5 L460.0 116.9 L463.6 113.5 L467.0 112.0 L472.0 111.1 L479.0 110.2 L486.4 109.7 L494.0 109.3 L500.8 109.2 L504.0 110.0 L506.8 111.1 L509.0 113.5 L511.6 116.4 L514.0 119.0 L516.4 122.4 L517.0 125.0 L517.6 128.4 L520.0 131.5 L523.6 135.1 L529.0 134.8 L534.4 134.4 L540.0 133.5 L546.4 132.7 L552.4 132.0 L552.0 128.4 L554.0 130.0 L556.0 132.0 L558.9 133.2 L560.3 137.5 L563.0 139.0 L565.6 140.4 L569.2 139.2 L569.9 145.2 L572.3 150.0 L572.5 155.0 L571.6 159.6 L570.5 164.0 L569.2 168.0 L567.0 171.0 L565.6 174.0 L569.2 177.6 L565.6 182.4 L566.8 187.2 L572.3 187.2 L565.6 187.9 L564.4 194.4 L561.0 197.0 L558.4 199.9 L561.0 204.0 L563.2 207.6 L565.5 212.0 L568.0 217.2 L572.0 221.5 L576.4 225.6 L582.0 231.0 L587.2 236.4 L592.0 241.5 L596.8 247.2 L598.8 251.3 L599.9 258.0 L603.3 262.0 L609.5 261.2 L602.0 264.7 L607.3 272.7 L609.0 278.0 L611.3 283.3 L615.3 292.7 L610.5 300.7 L614.0 310.0 L617.0 315.0 L619.3 319.9 L620.1 330.0 L618.0 342.0 L612.7 345.5 L608.0 350.0 L604.7 354.5 L602.5 364.7 L598.8 375.3 L594.8 384.7 L594.5 396.0 L594.5 407.3 L598.0 416.7 L603.3 422.0 L607.0 428.0 L610.0 434.0 L613.8 439.8 L619.4 451.0 L627.8 463.6 L628.7 472.0 L628.4 486.0 L632.6 495.8 L634.8 511.2 L639.0 526.6 L646.0 536.4 L653.9 543.4 L660.0 556.0 L667.0 570.0 L674.0 581.3 L675.4 589.7 L670.7 593.9 L675.4 602.3 L677.4 608.7 L682.4 610.7 L688.0 614.9 L695.0 618.2 L702.0 614.9 L713.2 613.5 L724.5 609.3 L741.3 608.4 L755.3 610.7 L758.0 607.9 L766.5 608.7 L769.3 605.9 L780.5 604.0 L795.6 594.4 L810.5 581.6 L823.3 573.0 L834.0 553.8 L849.0 543.2 L855.3 521.8 L853.2 509.0 L857.5 502.6 L868.1 498.4M887.3 487.7 L888.2 470.6 L885.2 457.8 L883.0 445.0 L878.8 438.6M884.0 432.0 L889.5 423.7 L902.3 413.0 L915.0 404.5 L932.1 398.1 L942.8 389.6 L948.3 381.0M949.5 217.0 L948.2 221.3 L945.3 231.5 L940.9 240.3 L936.0 245.0 L933.5 249.1 L931.0 255.0 L929.1 260.9 L930.0 267.0 L932.1 272.6 L936.5 281.4 L938.0 290.2 L935.0 302.0 L939.4 310.8 L946.8 315.2 L949.7 316.7M948.5 322.0 L948.0 332.0M257.0 45.5 L259.0 44.5 L261.0 45.5 L259.0 47.0ZM555.0 148.5 L557.0 143.0 L560.3 142.3 L559.5 147.0 L557.5 149.5ZM529.6 185.5 L531.0 183.6 L533.5 184.0 L534.0 186.0 L532.0 187.5 L530.0 187.2ZM845.0 190.0 L849.0 188.0 L852.0 185.0 L856.0 186.0 L859.0 183.0 L862.0 185.5 L866.0 184.5 L868.0 187.0 L869.5 191.0 L873.0 193.5 L878.5 192.0 L880.8 194.5 L876.0 197.0 L873.0 200.0 L872.0 204.0 L869.5 206.0 L869.0 210.0 L866.0 212.0 L867.0 215.0 L863.0 214.0 L862.0 218.0 L858.0 216.0 L856.0 220.0 L855.0 224.0 L853.0 219.0 L850.0 221.0 L848.0 218.0 L845.0 222.0 L842.5 221.0 L843.0 216.0 L840.8 213.0 L842.0 207.0 L841.5 200.0 L843.0 195.0ZM894.7 132.0 L898.0 132.0 L899.5 146.7 L902.7 154.7 L901.3 159.5 L897.3 153.3 L893.3 144.0 L893.0 135.0ZM825.9 173.3 L831.0 166.0 L837.3 158.7 L839.0 158.0 L836.0 165.3 L829.3 176.0 L826.5 176.5ZM809.3 230.2 L811.5 230.2 L815.7 250.1 L823.8 271.5 L834.5 293.0 L831.8 297.3 L822.2 282.3 L813.0 260.8 L809.3 242.0ZM870.0 306.0 L872.4 325.6 L870.3 340.5 L874.5 355.5 L883.0 364.0 L884.5 363.0 L881.8 342.7 L880.0 317.0 L877.0 307.0ZM933.4 262.0 L936.0 259.0 L938.0 263.0 L936.5 268.5 L934.0 267.0ZM938.0 248.6 L941.0 247.0 L942.6 251.0 L940.0 256.0 L938.0 253.0Z" stroke="#fff" stroke-width="1" fill="none" stroke-linejoin="round" shape-rendering="crispEdges"/>
<text class="m" x="134.9" y="70.1" font-size="11.95" fill="#ff0000" textLength="23.0" lengthAdjust="spacingAndGlyphs">25W</text>
<text class="m" x="195.5" y="70.1" font-size="11.95" fill="#ff0000" textLength="23.0" lengthAdjust="spacingAndGlyphs">20W</text>
<text class="m" x="257.0" y="70.1" font-size="11.95" fill="#ff0000" textLength="23.0" lengthAdjust="spacingAndGlyphs">15W</text>
<text class="m" x="318.0" y="70.1" font-size="11.95" fill="#ff0000" textLength="23.0" lengthAdjust="spacingAndGlyphs">10W</text>
<text class="m" x="389.0" y="70.1" font-size="11.95" fill="#ff0000" textLength="15.0" lengthAdjust="spacingAndGlyphs">5W</text>
<text class="m" x="445.1" y="70.1" font-size="11.95" fill="#ff0000" textLength="6.8" lengthAdjust="spacingAndGlyphs">0</text>
<text class="m" x="512.2" y="70.1" font-size="11.95" fill="#ff0000" textLength="15.0" lengthAdjust="spacingAndGlyphs">5E</text>
<text class="m" x="566.1" y="70.1" font-size="11.95" fill="#ff0000" textLength="23.0" lengthAdjust="spacingAndGlyphs">10E</text>
<text class="m" x="628.8" y="70.1" font-size="11.95" fill="#ff0000" textLength="23.0" lengthAdjust="spacingAndGlyphs">15E</text>
<text class="m" x="690.7" y="70.1" font-size="11.95" fill="#ff0000" textLength="23.0" lengthAdjust="spacingAndGlyphs">20E</text>
<text class="m" x="752.8" y="70.1" font-size="11.95" fill="#ff0000" textLength="23.0" lengthAdjust="spacingAndGlyphs">25E</text>
<text class="m" x="814.7" y="70.1" font-size="11.95" fill="#ff0000" textLength="23.0" lengthAdjust="spacingAndGlyphs">30E</text>
<text class="m" x="877.9" y="70.1" font-size="11.95" fill="#ff0000" textLength="23.0" lengthAdjust="spacingAndGlyphs">35E</text>
<text class="m" x="879.8" y="130.0" font-size="11.95" fill="#ff0000" textLength="15.8" lengthAdjust="spacingAndGlyphs">5N</text>
<text class="m" x="876.1" y="191.0" font-size="11.95" fill="#ff0000" textLength="6.8" lengthAdjust="spacingAndGlyphs">0</text>
<text class="m" x="881.4" y="253.0" font-size="11.95" fill="#ff0000" textLength="16.7" lengthAdjust="spacingAndGlyphs">5S</text>
<text class="m" x="874.0" y="315.0" font-size="11.95" fill="#ff0000" textLength="24.1" lengthAdjust="spacingAndGlyphs">10S</text>
<text class="m" x="876.1" y="377.0" font-size="11.95" fill="#ff0000" textLength="23.5" lengthAdjust="spacingAndGlyphs">15S</text>
<text class="m" x="875.5" y="438.0" font-size="11.95" fill="#ff0000" textLength="24.2" lengthAdjust="spacingAndGlyphs">20S</text>
<text class="m" x="875.5" y="500.0" font-size="11.95" fill="#ff0000" textLength="24.2" lengthAdjust="spacingAndGlyphs">25S</text>
<text class="m" x="875.5" y="562.0" font-size="11.95" fill="#ff0000" textLength="24.2" lengthAdjust="spacingAndGlyphs">30S</text>
<text class="m" x="877.7" y="623.0" font-size="11.95" fill="#ff0000" textLength="23.9" lengthAdjust="spacingAndGlyphs">35S</text>
<text class="m" x="877.7" y="685.0" font-size="11.95" fill="#ff0000" textLength="23.9" lengthAdjust="spacingAndGlyphs">40S</text>
<rect x="46.5" y="47.5" width="18" height="353" fill="none" stroke="#fff" stroke-width="1"/>
<rect x="47" y="48" width="17" height="32" fill="rgb(90,0,0)"/>
<rect x="47" y="80" width="17" height="32" fill="rgb(238,0,0)"/>
<rect x="47" y="112" width="17" height="32" fill="rgb(255,85,0)"/>
<rect x="47" y="144" width="17" height="32" fill="rgb(255,165,0)"/>
<rect x="47" y="176" width="17" height="32" fill="rgb(255,255,0)"/>
<rect x="47" y="208" width="17" height="32" fill="rgb(154,255,0)"/>
<rect x="47" y="240" width="17" height="32" fill="rgb(0,139,0)"/>
<rect x="47" y="272" width="17" height="32" fill="rgb(0,255,255)"/>
<rect x="47" y="304" width="17" height="32" fill="rgb(0,128,255)"/>
<rect x="47" y="336" width="17" height="32" fill="rgb(0,0,255)"/>
<rect x="47" y="368" width="17" height="32" fill="rgb(138,43,226)"/>
<text class="t" x="20.8" y="51.7" font-size="10.8" fill="#ffa882" textLength="19.4" lengthAdjust="spacingAndGlyphs">100</text>
<text class="t" x="27.2" y="83.7" font-size="10.8" fill="#ffa882" textLength="13.0" lengthAdjust="spacingAndGlyphs">80</text>
<text class="t" x="27.2" y="115.7" font-size="10.8" fill="#ffa882" textLength="13.0" lengthAdjust="spacingAndGlyphs">70</text>
<text class="t" x="27.2" y="147.7" font-size="10.8" fill="#ffa882" textLength="13.0" lengthAdjust="spacingAndGlyphs">60</text>
<text class="t" x="27.2" y="179.7" font-size="10.8" fill="#ffa882" textLength="13.0" lengthAdjust="spacingAndGlyphs">50</text>
<text class="t" x="27.2" y="211.7" font-size="10.8" fill="#ffa882" textLength="13.0" lengthAdjust="spacingAndGlyphs">40</text>
<text class="t" x="27.2" y="243.7" font-size="10.8" fill="#ffa882" textLength="13.0" lengthAdjust="spacingAndGlyphs">30</text>
<text class="t" x="27.2" y="275.7" font-size="10.8" fill="#ffa882" textLength="13.0" lengthAdjust="spacingAndGlyphs">25</text>
<text class="t" x="27.2" y="307.7" font-size="10.8" fill="#ffa882" textLength="13.0" lengthAdjust="spacingAndGlyphs">20</text>
<text class="t" x="27.2" y="339.7" font-size="10.8" fill="#ffa882" textLength="13.0" lengthAdjust="spacingAndGlyphs">15</text>
<text class="t" x="27.2" y="371.7" font-size="10.8" fill="#ffa882" textLength="13.0" lengthAdjust="spacingAndGlyphs">10</text>
<text class="t" x="34.0" y="403.7" font-size="10.8" fill="#ffa882" textLength="6.2" lengthAdjust="spacingAndGlyphs">0</text>
<text class="t" x="9.2" y="27" font-size="10.8" fill="#ffb400">NASA Langley (M04.0)</text>
<text class="t" x="11.2" y="41.6" font-size="10.8" fill="#ffa07a">BBALB (%)</text>
<text class="t" x="472.4" y="15.8" font-size="16.7" fill="#fff" text-anchor="middle">BROADBAND ALBEDO</text>
<text class="t" x="466.3" y="30.5" font-size="14.0" fill="#fff" text-anchor="middle">Aug 02, 2017 18:00 UTC</text>
<text class="m" x="224.5" y="747.2" font-size="11.85" fill="#f0f0f0" textLength="502.5" lengthAdjust="spacingAndGlyphs" xml:space="preserve" style="white-space:pre">MT10  BROADBAND ALBEDO   AUG 02, 2017 18:00Z   NASA LARC</text>
<rect x="269" y="284" width="7" height="7" fill="#ff00ff"/>
<rect x="376" y="382" width="7" height="7" fill="#ff00ff"/>
<text class="m" x="266.5" y="283.6" font-size="17" font-weight="bold" fill="#fff" textLength="17" lengthAdjust="spacingAndGlyphs">X1</text>
<text class="m" x="376" y="402.6" font-size="17" font-weight="bold" fill="#fff" textLength="20" lengthAdjust="spacingAndGlyphs">X2</text>
</svg></body></html>
